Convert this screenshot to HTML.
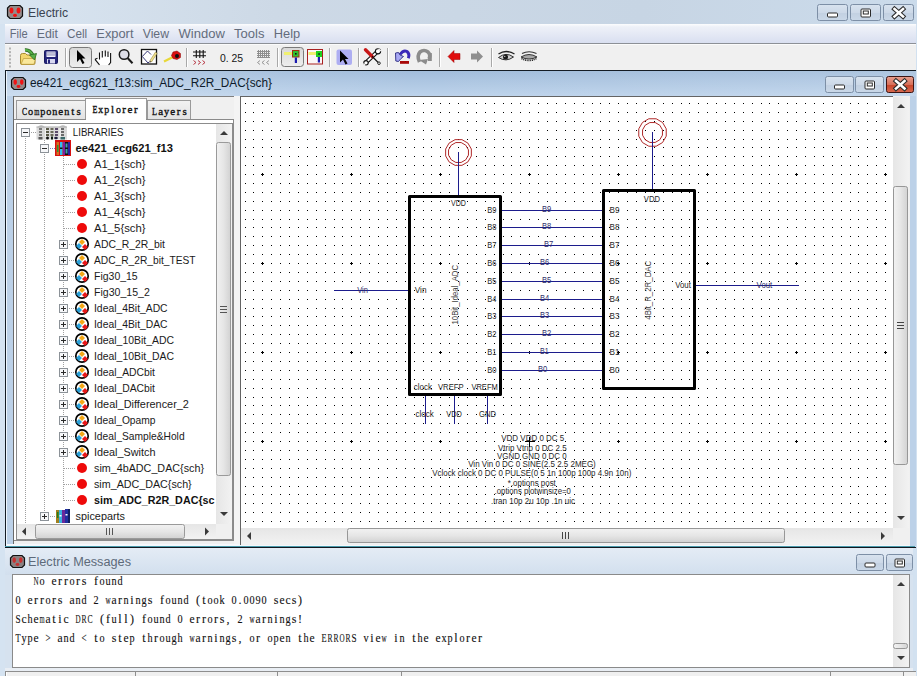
<!DOCTYPE html><html><head><meta charset="utf-8"><style>html,body{margin:0;padding:0;width:917px;height:676px;overflow:hidden;background:#d3e1f0}svg{position:absolute;left:0;top:0;display:block}svg{font-family:"Liberation Sans",sans-serif}</style></head><body>
<svg font-family="Liberation Sans, sans-serif" width="917" height="676" viewBox="0 0 917 676">
<defs>
<linearGradient id="gTitle" x1="0" y1="0" x2="1" y2="0"><stop offset="0" stop-color="#d9e5f1"/><stop offset="0.3" stop-color="#cdd9e6"/><stop offset="0.7" stop-color="#c7d5e4"/><stop offset="1" stop-color="#cbdbeb"/></linearGradient>
<linearGradient id="gMenu" x1="0" y1="0" x2="0" y2="1"><stop offset="0" stop-color="#fcfdfe"/><stop offset="0.15" stop-color="#eef1f8"/><stop offset="1" stop-color="#d9dff0"/></linearGradient>
<linearGradient id="gChild" x1="0" y1="0" x2="0" y2="1"><stop offset="0" stop-color="#a2bddb"/><stop offset="1" stop-color="#bdd3eb"/></linearGradient><linearGradient id="gChildH" x1="0" y1="0" x2="1" y2="0"><stop offset="0" stop-color="#fff" stop-opacity="0.22"/><stop offset="0.45" stop-color="#fff" stop-opacity="0"/><stop offset="0.7" stop-color="#fff" stop-opacity="0.05"/><stop offset="1" stop-color="#fff" stop-opacity="0.12"/></linearGradient><linearGradient id="gMsgT" x1="0" y1="0" x2="0" y2="1"><stop offset="0" stop-color="#e4ecf5"/><stop offset="1" stop-color="#d2dfee"/></linearGradient>
<linearGradient id="gBtn" x1="0" y1="0" x2="0" y2="1"><stop offset="0" stop-color="#d8e3ef"/><stop offset="0.5" stop-color="#cdd9e8"/><stop offset="0.51" stop-color="#c2d0e1"/><stop offset="1" stop-color="#cad8e8"/></linearGradient>
<linearGradient id="gClose" x1="0" y1="0" x2="0" y2="1"><stop offset="0" stop-color="#e8a090"/><stop offset="0.5" stop-color="#d8705a"/><stop offset="0.51" stop-color="#c7442a"/><stop offset="1" stop-color="#d86a50"/></linearGradient>
<linearGradient id="gPress" x1="0" y1="0" x2="0" y2="1"><stop offset="0" stop-color="#d8d8d8"/><stop offset="1" stop-color="#eeeeee"/></linearGradient>
<linearGradient id="gThumbV" x1="0" y1="0" x2="1" y2="0"><stop offset="0" stop-color="#f2f2f2"/><stop offset="0.5" stop-color="#e6e6e6"/><stop offset="1" stop-color="#d2d2d2"/></linearGradient>
<linearGradient id="gThumbH" x1="0" y1="0" x2="0" y2="1"><stop offset="0" stop-color="#f2f2f2"/><stop offset="0.5" stop-color="#e6e6e6"/><stop offset="1" stop-color="#d2d2d2"/></linearGradient>
<linearGradient id="gTrackV" x1="0" y1="0" x2="1" y2="0"><stop offset="0" stop-color="#e6e6e6"/><stop offset="1" stop-color="#f2f2f2"/></linearGradient>
<linearGradient id="gTrackH" x1="0" y1="0" x2="0" y2="1"><stop offset="0" stop-color="#e6e6e6"/><stop offset="1" stop-color="#f2f2f2"/></linearGradient>
<linearGradient id="gTab" x1="0" y1="0" x2="0" y2="1"><stop offset="0" stop-color="#f2f2f2"/><stop offset="1" stop-color="#e2e2e2"/></linearGradient>
<clipPath id="cTree"><rect x="17" y="124" width="199" height="400"/></clipPath>
<clipPath id="cCanvas"><rect x="241" y="97" width="652" height="431"/></clipPath>
</defs>
<rect x="0" y="0" width="917" height="676" fill="url(#gTitle)"/>
<rect x="0" y="24" width="5" height="652" fill="#d5e3f1"/>
<rect x="913" y="24" width="4" height="652" fill="#d2e1f0"/>
<path d="M10.0,5.5 H20.0 L22.5,8.0 V16.0 L20.0,18.5 H10.0 L7.5,16.0 V8.0 Z" fill="#948a8a" stroke="#111" stroke-width="1.2"/>
<ellipse cx="11.50" cy="10.50" rx="1.90" ry="3.00" fill="#f01414"/>
<ellipse cx="18.50" cy="10.50" rx="1.90" ry="3.00" fill="#f01414"/>
<ellipse cx="15.00" cy="15.30" rx="2.00" ry="1.60" fill="#f01414"/>
<text x="28" y="17" font-size="13" fill="#3a4350" textLength="40" lengthAdjust="spacingAndGlyphs">Electric</text>
<rect x="817.5" y="4.5" width="30" height="16" rx="2" fill="url(#gBtn)" stroke="#7d8fa6"/>
<rect x="827.5" y="13.0" width="10" height="4" rx="1" fill="#fff" stroke="#2a2a2a" stroke-width="1"/>
<rect x="850.5" y="4.5" width="30" height="16" rx="2" fill="url(#gBtn)" stroke="#7d8fa6"/>
<rect x="861.0" y="9.0" width="9.5" height="8" rx="1" fill="#fff" stroke="#2a2a2a" stroke-width="1"/>
<rect x="863.3" y="11.0" width="5" height="3" fill="#fff" stroke="#2a2a2a" stroke-width="1"/>
<rect x="883.5" y="4.5" width="30" height="16" rx="2" fill="url(#gBtn)" stroke="#7d8fa6"/>
<path d="M894.5,9.0 L903.0,16.5 M903.0,9.0 L894.5,16.5" stroke="#2a2a2a" stroke-width="4.6" stroke-linecap="square"/>
<path d="M894.5,9.0 L903.0,16.5 M903.0,9.0 L894.5,16.5" stroke="#fff" stroke-width="2.6" stroke-linecap="square"/>
<rect x="5" y="24" width="911" height="19" fill="url(#gMenu)"/>
<rect x="5" y="43" width="911" height="1" fill="#8c9096"/>
<text x="9.7" y="37.7" font-size="12.5" fill="#636c7c" textLength="17.9" lengthAdjust="spacingAndGlyphs">File</text>
<text x="36.7" y="37.7" font-size="12.5" fill="#636c7c" textLength="21.3" lengthAdjust="spacingAndGlyphs">Edit</text>
<text x="67" y="37.7" font-size="12.5" fill="#636c7c" textLength="20.2" lengthAdjust="spacingAndGlyphs">Cell</text>
<text x="96.3" y="37.7" font-size="12.5" fill="#636c7c" textLength="37.2" lengthAdjust="spacingAndGlyphs">Export</text>
<text x="142.7" y="37.7" font-size="12.5" fill="#636c7c" textLength="26.3" lengthAdjust="spacingAndGlyphs">View</text>
<text x="178.5" y="37.7" font-size="12.5" fill="#636c7c" textLength="46.3" lengthAdjust="spacingAndGlyphs">Window</text>
<text x="234" y="37.7" font-size="12.5" fill="#636c7c" textLength="30.4" lengthAdjust="spacingAndGlyphs">Tools</text>
<text x="273.8" y="37.7" font-size="12.5" fill="#636c7c" textLength="26.4" lengthAdjust="spacingAndGlyphs">Help</text>
<rect x="5" y="44" width="911" height="26" fill="#f0f0f0"/>
<rect x="5" y="44" width="911" height="1" fill="#fbfbfb"/>
<rect x="9" y="47.5" width="2" height="2" fill="#b4b4b4"/>
<rect x="9" y="51.1" width="2" height="2" fill="#b4b4b4"/>
<rect x="9" y="54.7" width="2" height="2" fill="#b4b4b4"/>
<rect x="9" y="58.3" width="2" height="2" fill="#b4b4b4"/>
<rect x="9" y="61.9" width="2" height="2" fill="#b4b4b4"/>
<rect x="9" y="65.5" width="2" height="2" fill="#b4b4b4"/>
<rect x="65" y="48" width="1" height="19" fill="#a8a8a8"/><rect x="66" y="48" width="1" height="19" fill="#ffffff"/>
<rect x="186" y="48" width="1" height="19" fill="#a8a8a8"/><rect x="187" y="48" width="1" height="19" fill="#ffffff"/>
<rect x="277" y="48" width="1" height="19" fill="#a8a8a8"/><rect x="278" y="48" width="1" height="19" fill="#ffffff"/>
<rect x="329" y="48" width="1" height="19" fill="#a8a8a8"/><rect x="330" y="48" width="1" height="19" fill="#ffffff"/>
<rect x="358" y="48" width="1" height="19" fill="#a8a8a8"/><rect x="359" y="48" width="1" height="19" fill="#ffffff"/>
<rect x="387" y="48" width="1" height="19" fill="#a8a8a8"/><rect x="388" y="48" width="1" height="19" fill="#ffffff"/>
<rect x="439" y="48" width="1" height="19" fill="#a8a8a8"/><rect x="440" y="48" width="1" height="19" fill="#ffffff"/>
<rect x="491" y="48" width="1" height="19" fill="#a8a8a8"/><rect x="492" y="48" width="1" height="19" fill="#ffffff"/>
<rect x="69.5" y="47.5" width="22" height="20" rx="3" fill="url(#gPress)" stroke="#7a7a7a"/>
<rect x="281.5" y="47.5" width="22" height="19" rx="3" fill="url(#gPress)" stroke="#7a7a7a"/>
<path d="M20.5,55.5 Q20.5,53.5 22.5,53.5 L25.5,53.5 L27,55 L33,55 Q35,55 35,57 L35,63 Q35,64.5 33.5,64.5 L22,64.5 Q20.5,64.5 20.5,63 Z" fill="#f3d66e" stroke="#a88a30" stroke-width="1"/>
<path d="M21,64.3 L23.5,58.5 L35.5,58.5 L34,64.3 Z" fill="#fae89a" stroke="#b89a3a" stroke-width="0.7"/>
<path d="M25,50 Q30,49.5 33,55.5" stroke="#2a6a20" stroke-width="3.4" fill="none"/><path d="M25,50 Q30,49.5 33,55.5" stroke="#58b048" stroke-width="2" fill="none"/><path d="M29.5,55 L36.5,53.5 L34.5,60 Z" fill="#58b048" stroke="#2a6a20" stroke-width="0.8"/>
<rect x="44.5" y="50.5" width="13" height="13" rx="1" fill="#25257a" stroke="#1a1a60"/><rect x="46.5" y="51.5" width="9" height="5.5" fill="#f4f4fc"/><rect x="47" y="52.5" width="8" height="0.9" fill="#7a7aa8"/><rect x="47" y="54.5" width="8" height="0.9" fill="#7a7aa8"/><rect x="47" y="59" width="8" height="4.5" fill="#d8d8f0"/><rect x="48" y="59.5" width="2" height="4" fill="#25257a"/>
<path d="M77,50 L77,62 L80,59 L82.5,64 L84.5,63 L82,58.5 L85.5,58.5 Z" fill="#000"/>
<path d="M95,59.3 L98.5,57.5 L99.5,52.5 L110.6,53 L110.6,62.5 L108.6,65 L100,65 Z" fill="#fff"/>
<path d="M99.5,52.5 V59.5 M102.3,51 V57.5 M105.3,50.5 V56.5 M108,51.5 V57 M110.6,53 V62.5 L108.6,65 M95,59.3 L99.5,64.8 M95,59.3 L97.5,58.3" stroke="#111" stroke-width="1.1" fill="none"/>
<circle cx="124.1" cy="54.5" r="4.8" fill="#dcdce6" stroke="#1a1a1a" stroke-width="1.5"/><path d="M127.6,58 L132.5,63.3" stroke="#1a1a1a" stroke-width="2"/>
<rect x="141.5" y="49.5" width="15" height="14.5" fill="#fff" stroke="#111" stroke-width="1.3"/><path d="M142.3,56.5 L147.5,51 L151,54.5 M149.5,61.5 L148,63 L142.3,56.5" fill="none" stroke="#22226a" stroke-width="0.9"/><path d="M150,60.5 L155.5,52 L157,53.5 L151.5,62 Z" fill="#f0e090" stroke="#a09040" stroke-width="0.6"/><path d="M150,60.5 L151.5,62 L149.3,62.8 Z" fill="#6a5a40"/>
<path d="M164,61.5 L173,57" stroke="#e8d838" stroke-width="2.2"/><polygon points="173,52 177,51 180.5,53.5 180.5,57.5 177,59.5 173,58.5 171.5,55.5" fill="#d81010" stroke="#800" stroke-width="0.5"/><circle cx="177" cy="56" r="2" fill="#111"/>
<path d="M193,52 H206 M193,55.8 H206 M196.3,50 V58 M199.8,50 V58 M203.2,50 V58" stroke="#111" stroke-width="1.1" fill="none"/>
<path d="M193.5,60.5 L196,62.5 L193.5,64.5 M198,60.5 L200.5,62.5 L198,64.5 M202.5,60.5 L205,62.5 L202.5,64.5" stroke="#b02030" stroke-width="0.9" fill="none"/>
<text x="219.9" y="61.7" font-size="11.5" fill="#151515" textLength="23.1" lengthAdjust="spacingAndGlyphs" xml:space="preserve">0. 25</text>
<path d="M257,51h13v1h-13zM257,53h13v1h-13zM257,55h13v1h-13zM257,57h13v1h-13zM258,50h1v8h-1zM260,50h1v8h-1zM262,50h1v8h-1zM264,50h1v8h-1zM266,50h1v8h-1zM268,50h1v8h-1z" fill="#8e8e8e" shape-rendering="crispEdges"/>
<path d="M260,60.5 L257.5,62.5 L260,64.5 M264.5,60.5 L262,62.5 L264.5,64.5 M269,60.5 L266.5,62.5 L269,64.5" stroke="#8a8a8a" stroke-width="0.9" fill="none"/>
<rect x="284" y="52" width="9" height="3" fill="#f0f070"/><rect x="292.5" y="50.5" width="6.5" height="6.5" fill="#30c030" stroke="#a03010" stroke-width="1"/><rect x="295" y="53" width="1.6" height="1.6" fill="#111"/><rect x="294.8" y="57.5" width="2.2" height="5.5" fill="#1a1ab0"/>
<rect x="307.5" y="49.5" width="15" height="14.5" fill="#fbf6f8" stroke="#a82020" stroke-width="1"/><rect x="308.5" y="52" width="9" height="3" fill="#f0f070"/><rect x="316" y="51" width="6" height="6" fill="#20d020"/><rect x="318.3" y="53.3" width="1.5" height="1.5" fill="#111"/><rect x="317.8" y="57" width="2.2" height="5.5" fill="#1a1ab0"/>
<rect x="336.5" y="49.5" width="15.5" height="15.5" rx="2" fill="#aeaef2"/>
<path d="M340,50.5 L340,62.5 L343,59.5 L345.5,64.5 L347.5,63.5 L345,59.0 L348.5,59.0 Z" fill="#000"/>
<path d="M366,62.5 L377.5,51.5" stroke="#111" stroke-width="4"/><path d="M366,62.5 L377.5,51.5" stroke="#fff" stroke-width="1.8"/>
<circle cx="378" cy="51.3" r="2.6" fill="#fff" stroke="#111" stroke-width="1.1"/><path d="M378.5,49 L381,51" stroke="#f0f0f0" stroke-width="1.6"/>
<circle cx="366" cy="62.8" r="2.2" fill="#fff" stroke="#111" stroke-width="1.1"/><path d="M363.5,63.5 L365,65.5" stroke="#f0f0f0" stroke-width="1.4"/>
<path d="M365.5,49.8 L372.3,56.6" stroke="#c81818" stroke-width="3.4" stroke-linecap="round"/><path d="M372,56.3 L378.3,62.6" stroke="#111" stroke-width="1.3"/><circle cx="379" cy="63.2" r="1.3" fill="#fff" stroke="#111" stroke-width="0.9"/>
<path d="M400,54.5 Q403.5,49.5 407,51.5 Q410,54 408.3,58.3" stroke="#3a28b8" stroke-width="3" fill="none"/>
<path d="M395.5,53 L398.5,52.5 L400,55 L403.5,56.5 L401,58.5 L398.5,61.5 L395.8,61 Z" fill="#a8a8f4" stroke="#2a2a80" stroke-width="0.9"/>
<rect x="400" y="61" width="9" height="2.8" fill="#a80808"/>
<path d="M419.5,62 Q416.5,56 420,52 Q424,49 428,52 Q431,55 429,59" stroke="#8c8c8c" stroke-width="3.6" fill="none"/><rect x="428" y="53" width="3.8" height="8" fill="#8c8c8c"/><path d="M419,60 L426,64.5 L428,59 Z" fill="#8c8c8c"/><path d="M422,54.5 Q424,52.5 426,54.5" stroke="#f0f0f0" stroke-width="1.2" fill="none"/>
<polygon points="448,56.5 454,50.5 454,53.5 460,53.5 460,59.5 454,59.5 454,62.5" fill="#e00c0c" stroke="#900" stroke-width="0.5"/>
<polygon points="483,56.5 477,50.5 477,53.5 471,53.5 471,59.5 477,59.5 477,62.5" fill="#8f8f8f"/>
<path d="M498.5,57.5 Q506,51.5 513.5,57 Q506,62.5 498.5,57.5 Z" fill="#cfcfcf" stroke="#333" stroke-width="1"/><circle cx="505.5" cy="57" r="2.5" fill="#1a1a1a"/><circle cx="504.8" cy="56.3" r="0.6" fill="#fff"/><path d="M498.5,54 Q506,49 514.5,54" stroke="#222" stroke-width="1.4" fill="none"/>
<path d="M521,57 Q529,52 537,57 Q529,61 521,57 Z" fill="#a8a8a8" stroke="#333" stroke-width="1"/><path d="M521.5,58.5 Q529,62.5 536.5,58.5" stroke="#222" stroke-width="1.5" stroke-dasharray="1,0.8" fill="none"/><path d="M522,53.5 Q529,50 536.5,53.5" stroke="#333" stroke-width="1.2" fill="none"/>
<rect x="5" y="70" width="911" height="1" fill="#141c24"/>
<rect x="5" y="70" width="1" height="478" fill="#141c24"/>
<rect x="6" y="71" width="1" height="475" fill="#eef6fd"/>
<rect x="7" y="71" width="909" height="25" fill="url(#gChild)"/>
<rect x="7" y="71" width="909" height="25" fill="url(#gChildH)"/>
<rect x="7" y="96" width="6" height="450" fill="#bcd1e8"/>
<rect x="909" y="96" width="1" height="450" fill="#f8fbfe"/>
<rect x="910" y="96" width="6" height="450" fill="#bcd1e8"/>
<rect x="7" y="544" width="903" height="2" fill="#f4f8fc"/>
<path d="M14.0,77.5 H23.0 L25.5,80.0 V87.0 L23.0,89.5 H14.0 L11.5,87.0 V80.0 Z" fill="#948a8a" stroke="#111" stroke-width="1.2"/>
<ellipse cx="15.22" cy="82.11" rx="1.78" ry="2.79" fill="#f01414"/>
<ellipse cx="21.78" cy="82.11" rx="1.78" ry="2.79" fill="#f01414"/>
<ellipse cx="18.50" cy="86.56" rx="1.88" ry="1.49" fill="#f01414"/>
<text x="30" y="87" font-size="12.5" fill="#0d1a2a" textLength="242" lengthAdjust="spacingAndGlyphs">ee421_ecg621_f13:sim_ADC_R2R_DAC{sch}</text>
<rect x="825.5" y="76.5" width="28" height="16" rx="2" fill="url(#gBtn)" stroke="#7d8fa6"/>
<rect x="834.5" y="85.0" width="10" height="4" rx="1" fill="#fff" stroke="#2a2a2a" stroke-width="1"/>
<rect x="855.5" y="76.5" width="28" height="16" rx="2" fill="url(#gBtn)" stroke="#7d8fa6"/>
<rect x="865.0" y="81.0" width="9.5" height="8" rx="1" fill="#fff" stroke="#2a2a2a" stroke-width="1"/>
<rect x="867.3" y="83.0" width="5" height="3" fill="#fff" stroke="#2a2a2a" stroke-width="1"/>
<rect x="886.5" y="76.5" width="27" height="16" rx="2" fill="url(#gClose)" stroke="#3a1414"/>
<path d="M896.0,81.0 L904.5,88.5 M904.5,81.0 L896.0,88.5" stroke="#2a2a2a" stroke-width="4.6" stroke-linecap="square"/>
<path d="M896.0,81.0 L904.5,88.5 M904.5,81.0 L896.0,88.5" stroke="#fff" stroke-width="2.6" stroke-linecap="square"/>
<rect x="13" y="96" width="227" height="448" fill="#f0f0f0"/>
<rect x="13" y="96" width="224" height="1" fill="#808080"/>
<rect x="13" y="96" width="1" height="448" fill="#6a6a6a"/>
<rect x="16.5" y="100.5" width="69" height="19" fill="url(#gTab)" stroke="#9a9a9a"/>
<rect x="147.5" y="100.5" width="43" height="19" fill="url(#gTab)" stroke="#9a9a9a"/>
<rect x="85.5" y="98.5" width="61" height="22" fill="#fff" stroke="#9a9a9a"/>
<text x="22.1" y="115.2" font-size="11" font-family="Liberation Serif" fill="#111" stroke="#111" stroke-width="0.35" textLength="5.1" lengthAdjust="spacingAndGlyphs">C</text>
<text x="28.1" y="115.2" font-size="11" font-family="Liberation Serif" fill="#111" stroke="#111" stroke-width="0.35" textLength="5.1" lengthAdjust="spacingAndGlyphs">o</text>
<text x="34.2" y="115.2" font-size="11" font-family="Liberation Serif" fill="#111" stroke="#111" stroke-width="0.35" textLength="5.1" lengthAdjust="spacingAndGlyphs">m</text>
<text x="40.2" y="115.2" font-size="11" font-family="Liberation Serif" fill="#111" stroke="#111" stroke-width="0.35" textLength="5.1" lengthAdjust="spacingAndGlyphs">p</text>
<text x="46.2" y="115.2" font-size="11" font-family="Liberation Serif" fill="#111" stroke="#111" stroke-width="0.35" textLength="5.1" lengthAdjust="spacingAndGlyphs">o</text>
<text x="52.2" y="115.2" font-size="11" font-family="Liberation Serif" fill="#111" stroke="#111" stroke-width="0.35" textLength="5.1" lengthAdjust="spacingAndGlyphs">n</text>
<text x="64.2" y="115.2" font-size="11" font-family="Liberation Serif" fill="#111" stroke="#111" stroke-width="0.35" textLength="5.1" lengthAdjust="spacingAndGlyphs">n</text>
<text x="58.3 71.2 76.6" y="115.2" font-size="11" font-family="Liberation Serif" fill="#111" stroke="#111" stroke-width="0.35">ets</text>
<text x="92.5" y="113.4" font-size="11" font-family="Liberation Serif" fill="#111" stroke="#111" stroke-width="0.35" textLength="4.9" lengthAdjust="spacingAndGlyphs">E</text>
<text x="98.3" y="113.4" font-size="11" font-family="Liberation Serif" fill="#111" stroke="#111" stroke-width="0.35" textLength="4.9" lengthAdjust="spacingAndGlyphs">x</text>
<text x="104.2" y="113.4" font-size="11" font-family="Liberation Serif" fill="#111" stroke="#111" stroke-width="0.35" textLength="4.9" lengthAdjust="spacingAndGlyphs">p</text>
<text x="115.9" y="113.4" font-size="11" font-family="Liberation Serif" fill="#111" stroke="#111" stroke-width="0.35" textLength="4.9" lengthAdjust="spacingAndGlyphs">o</text>
<text x="110.9 122.3 127.6 134.0" y="113.4" font-size="11" font-family="Liberation Serif" fill="#111" stroke="#111" stroke-width="0.35">lrer</text>
<text x="152.0" y="115.2" font-size="11" font-family="Liberation Serif" fill="#111" stroke="#111" stroke-width="0.35" textLength="5.1" lengthAdjust="spacingAndGlyphs">L</text>
<text x="164.0" y="115.2" font-size="11" font-family="Liberation Serif" fill="#111" stroke="#111" stroke-width="0.35" textLength="5.1" lengthAdjust="spacingAndGlyphs">y</text>
<text x="158.2 170.2 176.8 182.5" y="115.2" font-size="11" font-family="Liberation Serif" fill="#111" stroke="#111" stroke-width="0.35">aers</text>
<rect x="14" y="119" width="220" height="422" fill="#fff"/>
<rect x="14" y="119" width="220" height="1" fill="#8a8a8a"/><rect x="233" y="119" width="1" height="422" fill="#8a8a8a"/><rect x="14" y="540" width="220" height="1" fill="#8a8a8a"/>
<rect x="86" y="119" width="60" height="2" fill="#fff"/>
<rect x="16.5" y="123.5" width="216" height="416" fill="#fff" stroke="#8c8c8c"/>
<g clip-path="url(#cTree)">
<path d="M25,138h1v1h-1zM25,140h1v1h-1zM25,142h1v1h-1zM25,144h1v1h-1zM25,146h1v1h-1zM25,148h1v1h-1zM25,150h1v1h-1zM25,152h1v1h-1zM25,154h1v1h-1zM25,156h1v1h-1zM25,158h1v1h-1zM25,160h1v1h-1zM25,162h1v1h-1zM25,164h1v1h-1zM25,166h1v1h-1zM25,168h1v1h-1zM25,170h1v1h-1zM25,172h1v1h-1zM25,174h1v1h-1zM25,176h1v1h-1zM25,178h1v1h-1zM25,180h1v1h-1zM25,182h1v1h-1zM25,184h1v1h-1zM25,186h1v1h-1zM25,188h1v1h-1zM25,190h1v1h-1zM25,192h1v1h-1zM25,194h1v1h-1zM25,196h1v1h-1zM25,198h1v1h-1zM25,200h1v1h-1zM25,202h1v1h-1zM25,204h1v1h-1zM25,206h1v1h-1zM25,208h1v1h-1zM25,210h1v1h-1zM25,212h1v1h-1zM25,214h1v1h-1zM25,216h1v1h-1zM25,218h1v1h-1zM25,220h1v1h-1zM25,222h1v1h-1zM25,224h1v1h-1zM25,226h1v1h-1zM25,228h1v1h-1zM25,230h1v1h-1zM25,232h1v1h-1zM25,234h1v1h-1zM25,236h1v1h-1zM25,238h1v1h-1zM25,240h1v1h-1zM25,242h1v1h-1zM25,244h1v1h-1zM25,246h1v1h-1zM25,248h1v1h-1zM25,250h1v1h-1zM25,252h1v1h-1zM25,254h1v1h-1zM25,256h1v1h-1zM25,258h1v1h-1zM25,260h1v1h-1zM25,262h1v1h-1zM25,264h1v1h-1zM25,266h1v1h-1zM25,268h1v1h-1zM25,270h1v1h-1zM25,272h1v1h-1zM25,274h1v1h-1zM25,276h1v1h-1zM25,278h1v1h-1zM25,280h1v1h-1zM25,282h1v1h-1zM25,284h1v1h-1zM25,286h1v1h-1zM25,288h1v1h-1zM25,290h1v1h-1zM25,292h1v1h-1zM25,294h1v1h-1zM25,296h1v1h-1zM25,298h1v1h-1zM25,300h1v1h-1zM25,302h1v1h-1zM25,304h1v1h-1zM25,306h1v1h-1zM25,308h1v1h-1zM25,310h1v1h-1zM25,312h1v1h-1zM25,314h1v1h-1zM25,316h1v1h-1zM25,318h1v1h-1zM25,320h1v1h-1zM25,322h1v1h-1zM25,324h1v1h-1zM25,326h1v1h-1zM25,328h1v1h-1zM25,330h1v1h-1zM25,332h1v1h-1zM25,334h1v1h-1zM25,336h1v1h-1zM25,338h1v1h-1zM25,340h1v1h-1zM25,342h1v1h-1zM25,344h1v1h-1zM25,346h1v1h-1zM25,348h1v1h-1zM25,350h1v1h-1zM25,352h1v1h-1zM25,354h1v1h-1zM25,356h1v1h-1zM25,358h1v1h-1zM25,360h1v1h-1zM25,362h1v1h-1zM25,364h1v1h-1zM25,366h1v1h-1zM25,368h1v1h-1zM25,370h1v1h-1zM25,372h1v1h-1zM25,374h1v1h-1zM25,376h1v1h-1zM25,378h1v1h-1zM25,380h1v1h-1zM25,382h1v1h-1zM25,384h1v1h-1zM25,386h1v1h-1zM25,388h1v1h-1zM25,390h1v1h-1zM25,392h1v1h-1zM25,394h1v1h-1zM25,396h1v1h-1zM25,398h1v1h-1zM25,400h1v1h-1zM25,402h1v1h-1zM25,404h1v1h-1zM25,406h1v1h-1zM25,408h1v1h-1zM25,410h1v1h-1zM25,412h1v1h-1zM25,414h1v1h-1zM25,416h1v1h-1zM25,418h1v1h-1zM25,420h1v1h-1zM25,422h1v1h-1zM25,424h1v1h-1zM25,426h1v1h-1zM25,428h1v1h-1zM25,430h1v1h-1zM25,432h1v1h-1zM25,434h1v1h-1zM25,436h1v1h-1zM25,438h1v1h-1zM25,440h1v1h-1zM25,442h1v1h-1zM25,444h1v1h-1zM25,446h1v1h-1zM25,448h1v1h-1zM25,450h1v1h-1zM25,452h1v1h-1zM25,454h1v1h-1zM25,456h1v1h-1zM25,458h1v1h-1zM25,460h1v1h-1zM25,462h1v1h-1zM25,464h1v1h-1zM25,466h1v1h-1zM25,468h1v1h-1zM25,470h1v1h-1zM25,472h1v1h-1zM25,474h1v1h-1zM25,476h1v1h-1zM25,478h1v1h-1zM25,480h1v1h-1zM25,482h1v1h-1zM25,484h1v1h-1zM25,486h1v1h-1zM25,488h1v1h-1zM25,490h1v1h-1zM25,492h1v1h-1zM25,494h1v1h-1zM25,496h1v1h-1zM25,498h1v1h-1zM25,500h1v1h-1zM25,502h1v1h-1zM25,504h1v1h-1zM25,506h1v1h-1zM25,508h1v1h-1zM25,510h1v1h-1zM25,512h1v1h-1zM25,514h1v1h-1zM25,516h1v1h-1zM25,518h1v1h-1zM25,520h1v1h-1zM25,522h1v1h-1z" fill="#a0a0a0"/>
<path d="M44,140h1v1h-1zM44,142h1v1h-1z" fill="#a0a0a0"/>
<path d="M44,154h1v1h-1zM44,156h1v1h-1zM44,158h1v1h-1zM44,160h1v1h-1zM44,162h1v1h-1zM44,164h1v1h-1zM44,166h1v1h-1zM44,168h1v1h-1zM44,170h1v1h-1zM44,172h1v1h-1zM44,174h1v1h-1zM44,176h1v1h-1zM44,178h1v1h-1zM44,180h1v1h-1zM44,182h1v1h-1zM44,184h1v1h-1zM44,186h1v1h-1zM44,188h1v1h-1zM44,190h1v1h-1zM44,192h1v1h-1zM44,194h1v1h-1zM44,196h1v1h-1zM44,198h1v1h-1zM44,200h1v1h-1zM44,202h1v1h-1zM44,204h1v1h-1zM44,206h1v1h-1zM44,208h1v1h-1zM44,210h1v1h-1zM44,212h1v1h-1zM44,214h1v1h-1zM44,216h1v1h-1zM44,218h1v1h-1zM44,220h1v1h-1zM44,222h1v1h-1zM44,224h1v1h-1zM44,226h1v1h-1zM44,228h1v1h-1zM44,230h1v1h-1zM44,232h1v1h-1zM44,234h1v1h-1zM44,236h1v1h-1zM44,238h1v1h-1zM44,240h1v1h-1zM44,242h1v1h-1zM44,244h1v1h-1zM44,246h1v1h-1zM44,248h1v1h-1zM44,250h1v1h-1zM44,252h1v1h-1zM44,254h1v1h-1zM44,256h1v1h-1zM44,258h1v1h-1zM44,260h1v1h-1zM44,262h1v1h-1zM44,264h1v1h-1zM44,266h1v1h-1zM44,268h1v1h-1zM44,270h1v1h-1zM44,272h1v1h-1zM44,274h1v1h-1zM44,276h1v1h-1zM44,278h1v1h-1zM44,280h1v1h-1zM44,282h1v1h-1zM44,284h1v1h-1zM44,286h1v1h-1zM44,288h1v1h-1zM44,290h1v1h-1zM44,292h1v1h-1zM44,294h1v1h-1zM44,296h1v1h-1zM44,298h1v1h-1zM44,300h1v1h-1zM44,302h1v1h-1zM44,304h1v1h-1zM44,306h1v1h-1zM44,308h1v1h-1zM44,310h1v1h-1zM44,312h1v1h-1zM44,314h1v1h-1zM44,316h1v1h-1zM44,318h1v1h-1zM44,320h1v1h-1zM44,322h1v1h-1zM44,324h1v1h-1zM44,326h1v1h-1zM44,328h1v1h-1zM44,330h1v1h-1zM44,332h1v1h-1zM44,334h1v1h-1zM44,336h1v1h-1zM44,338h1v1h-1zM44,340h1v1h-1zM44,342h1v1h-1zM44,344h1v1h-1zM44,346h1v1h-1zM44,348h1v1h-1zM44,350h1v1h-1zM44,352h1v1h-1zM44,354h1v1h-1zM44,356h1v1h-1zM44,358h1v1h-1zM44,360h1v1h-1zM44,362h1v1h-1zM44,364h1v1h-1zM44,366h1v1h-1zM44,368h1v1h-1zM44,370h1v1h-1zM44,372h1v1h-1zM44,374h1v1h-1zM44,376h1v1h-1zM44,378h1v1h-1zM44,380h1v1h-1zM44,382h1v1h-1zM44,384h1v1h-1zM44,386h1v1h-1zM44,388h1v1h-1zM44,390h1v1h-1zM44,392h1v1h-1zM44,394h1v1h-1zM44,396h1v1h-1zM44,398h1v1h-1zM44,400h1v1h-1zM44,402h1v1h-1zM44,404h1v1h-1zM44,406h1v1h-1zM44,408h1v1h-1zM44,410h1v1h-1zM44,412h1v1h-1zM44,414h1v1h-1zM44,416h1v1h-1zM44,418h1v1h-1zM44,420h1v1h-1zM44,422h1v1h-1zM44,424h1v1h-1zM44,426h1v1h-1zM44,428h1v1h-1zM44,430h1v1h-1zM44,432h1v1h-1zM44,434h1v1h-1zM44,436h1v1h-1zM44,438h1v1h-1zM44,440h1v1h-1zM44,442h1v1h-1zM44,444h1v1h-1zM44,446h1v1h-1zM44,448h1v1h-1zM44,450h1v1h-1zM44,452h1v1h-1zM44,454h1v1h-1zM44,456h1v1h-1zM44,458h1v1h-1zM44,460h1v1h-1zM44,462h1v1h-1zM44,464h1v1h-1zM44,466h1v1h-1zM44,468h1v1h-1zM44,470h1v1h-1zM44,472h1v1h-1zM44,474h1v1h-1zM44,476h1v1h-1zM44,478h1v1h-1zM44,480h1v1h-1zM44,482h1v1h-1zM44,484h1v1h-1zM44,486h1v1h-1zM44,488h1v1h-1zM44,490h1v1h-1zM44,492h1v1h-1zM44,494h1v1h-1zM44,496h1v1h-1zM44,498h1v1h-1zM44,500h1v1h-1zM44,502h1v1h-1zM44,504h1v1h-1zM44,506h1v1h-1zM44,508h1v1h-1zM44,510h1v1h-1z" fill="#a0a0a0"/>
<path d="M63,156h1v1h-1zM63,158h1v1h-1zM63,160h1v1h-1zM63,162h1v1h-1zM63,164h1v1h-1zM63,166h1v1h-1zM63,168h1v1h-1zM63,170h1v1h-1zM63,172h1v1h-1zM63,174h1v1h-1zM63,176h1v1h-1zM63,178h1v1h-1zM63,180h1v1h-1zM63,182h1v1h-1zM63,184h1v1h-1zM63,186h1v1h-1zM63,188h1v1h-1zM63,190h1v1h-1zM63,192h1v1h-1zM63,194h1v1h-1zM63,196h1v1h-1zM63,198h1v1h-1zM63,200h1v1h-1zM63,202h1v1h-1zM63,204h1v1h-1zM63,206h1v1h-1zM63,208h1v1h-1zM63,210h1v1h-1zM63,212h1v1h-1zM63,214h1v1h-1zM63,216h1v1h-1zM63,218h1v1h-1zM63,220h1v1h-1zM63,222h1v1h-1zM63,224h1v1h-1zM63,226h1v1h-1zM63,228h1v1h-1zM63,230h1v1h-1zM63,232h1v1h-1zM63,234h1v1h-1zM63,236h1v1h-1zM63,238h1v1h-1zM63,240h1v1h-1zM63,242h1v1h-1zM63,244h1v1h-1zM63,246h1v1h-1zM63,248h1v1h-1zM63,250h1v1h-1zM63,252h1v1h-1zM63,254h1v1h-1zM63,256h1v1h-1zM63,258h1v1h-1zM63,260h1v1h-1zM63,262h1v1h-1zM63,264h1v1h-1zM63,266h1v1h-1zM63,268h1v1h-1zM63,270h1v1h-1zM63,272h1v1h-1zM63,274h1v1h-1zM63,276h1v1h-1zM63,278h1v1h-1zM63,280h1v1h-1zM63,282h1v1h-1zM63,284h1v1h-1zM63,286h1v1h-1zM63,288h1v1h-1zM63,290h1v1h-1zM63,292h1v1h-1zM63,294h1v1h-1zM63,296h1v1h-1zM63,298h1v1h-1zM63,300h1v1h-1zM63,302h1v1h-1zM63,304h1v1h-1zM63,306h1v1h-1zM63,308h1v1h-1zM63,310h1v1h-1zM63,312h1v1h-1zM63,314h1v1h-1zM63,316h1v1h-1zM63,318h1v1h-1zM63,320h1v1h-1zM63,322h1v1h-1zM63,324h1v1h-1zM63,326h1v1h-1zM63,328h1v1h-1zM63,330h1v1h-1zM63,332h1v1h-1zM63,334h1v1h-1zM63,336h1v1h-1zM63,338h1v1h-1zM63,340h1v1h-1zM63,342h1v1h-1zM63,344h1v1h-1zM63,346h1v1h-1zM63,348h1v1h-1zM63,350h1v1h-1zM63,352h1v1h-1zM63,354h1v1h-1zM63,356h1v1h-1zM63,358h1v1h-1zM63,360h1v1h-1zM63,362h1v1h-1zM63,364h1v1h-1zM63,366h1v1h-1zM63,368h1v1h-1zM63,370h1v1h-1zM63,372h1v1h-1zM63,374h1v1h-1zM63,376h1v1h-1zM63,378h1v1h-1zM63,380h1v1h-1zM63,382h1v1h-1zM63,384h1v1h-1zM63,386h1v1h-1zM63,388h1v1h-1zM63,390h1v1h-1zM63,392h1v1h-1zM63,394h1v1h-1zM63,396h1v1h-1zM63,398h1v1h-1zM63,400h1v1h-1zM63,402h1v1h-1zM63,404h1v1h-1zM63,406h1v1h-1zM63,408h1v1h-1zM63,410h1v1h-1zM63,412h1v1h-1zM63,414h1v1h-1zM63,416h1v1h-1zM63,418h1v1h-1zM63,420h1v1h-1zM63,422h1v1h-1zM63,424h1v1h-1zM63,426h1v1h-1zM63,428h1v1h-1zM63,430h1v1h-1zM63,432h1v1h-1zM63,434h1v1h-1zM63,436h1v1h-1zM63,438h1v1h-1zM63,440h1v1h-1zM63,442h1v1h-1zM63,444h1v1h-1zM63,446h1v1h-1zM63,448h1v1h-1zM63,450h1v1h-1zM63,452h1v1h-1zM63,454h1v1h-1zM63,456h1v1h-1zM63,458h1v1h-1zM63,460h1v1h-1zM63,462h1v1h-1zM63,464h1v1h-1zM63,466h1v1h-1zM63,468h1v1h-1zM63,470h1v1h-1zM63,472h1v1h-1zM63,474h1v1h-1zM63,476h1v1h-1zM63,478h1v1h-1zM63,480h1v1h-1zM63,482h1v1h-1zM63,484h1v1h-1zM63,486h1v1h-1zM63,488h1v1h-1zM63,490h1v1h-1zM63,492h1v1h-1zM63,494h1v1h-1zM63,496h1v1h-1zM63,498h1v1h-1zM63,500h1v1h-1z" fill="#a0a0a0"/>
<rect x="21.5" y="128.5" width="8" height="8" fill="#f6f7f9" stroke="#8c9298"/>
<rect x="23" y="132" width="5" height="1" fill="#2a2a2a"/>
<path d="M31,132h1v1h-1zM33,132h1v1h-1zM35,132h1v1h-1z" fill="#a0a0a0"/>
<rect x="36.5" y="126.5" width="30.5" height="13" fill="#dadada"/>
<path d="M37,127.5 Q41,123 45.5,127.5 Z M58.5,127.5 Q63,123 67,127.5 Z" fill="#b4b4b4"/>
<rect x="36.5" y="126.5" width="30.5" height="1.2" fill="#bcbcbc"/>
<rect x="39" y="128" width="3" height="2" fill="#7a7a7a"/>
<rect x="39" y="131" width="3" height="2" fill="#7a7a7a"/>
<rect x="39" y="134" width="3" height="2" fill="#7a7a7a"/>
<rect x="46" y="128" width="3" height="2" fill="#5a5a48"/>
<rect x="46" y="131" width="3" height="2" fill="#5a5a48"/>
<rect x="46" y="134" width="3" height="2" fill="#5a5a48"/>
<rect x="50.5" y="128" width="3" height="2" fill="#6a6a5a"/>
<rect x="50.5" y="131" width="3" height="2" fill="#6a6a5a"/>
<rect x="50.5" y="134" width="3" height="2" fill="#6a6a5a"/>
<rect x="55" y="128" width="3" height="2" fill="#5a4a6a"/>
<rect x="55" y="131" width="3" height="2" fill="#5a4a6a"/>
<rect x="55" y="134" width="3" height="2" fill="#5a4a6a"/>
<rect x="61" y="128" width="3" height="2" fill="#6a6a6a"/>
<rect x="61" y="131" width="3" height="2" fill="#6a6a6a"/>
<rect x="61" y="134" width="3" height="2" fill="#6a6a6a"/>
<rect x="45" y="128" width="1" height="9" fill="#f4f4f4"/><rect x="59.5" y="128" width="1.2" height="9" fill="#f4f4f4"/>
<rect x="38.5" y="137" width="4" height="2.5" fill="#5a5a5a"/><circle cx="47.5" cy="138" r="1.5" fill="#111"/><rect x="51" y="136.5" width="2" height="3" fill="#0a1a10"/><ellipse cx="56" cy="138" rx="1.8" ry="1.3" fill="#1a1a3a"/><rect x="60.5" y="137" width="4.5" height="2.5" fill="#3a6a6a"/>
<text x="72.8" y="136" font-size="11" fill="#1a1a1a" textLength="50.7" lengthAdjust="spacingAndGlyphs">LIBRARIES</text>
<rect x="40.5" y="144.5" width="8" height="8" fill="#f6f7f9" stroke="#8c9298"/>
<rect x="42" y="148" width="5" height="1" fill="#2a2a2a"/>
<path d="M50,148h1v1h-1zM52,148h1v1h-1zM54,148h1v1h-1z" fill="#8080c0"/>
<rect x="55" y="140" width="16" height="16" fill="#d81010"/>
<rect x="56.5" y="142" width="2.5" height="13" fill="#d07020"/><rect x="57" y="145" width="1.5" height="7" fill="#309030"/><rect x="60" y="142" width="2.5" height="13" fill="#30c0f0"/><rect x="60" y="147.5" width="2.5" height="1.5" fill="#111"/><rect x="63" y="142" width="2" height="13" fill="#8020a0"/><rect x="65" y="142" width="3" height="13" fill="#111"/><rect x="65.5" y="143.5" width="2" height="4" fill="#40a0b0"/><rect x="65.5" y="149" width="2" height="4.5" fill="#40a0b0"/><rect x="68" y="142" width="2" height="13" fill="#3020a0"/>
<text x="75.6" y="152" font-size="11" font-weight="bold" fill="#111" textLength="97.3" lengthAdjust="spacingAndGlyphs">ee421_ecg621_f13</text>
<path d="M64,164h1v1h-1zM66,164h1v1h-1zM68,164h1v1h-1zM70,164h1v1h-1zM72,164h1v1h-1zM74,164h1v1h-1z" fill="#a0a0a0"/>
<circle cx="82" cy="164" r="5" fill="#ee0a0a"/>
<text x="94" y="168" font-size="11" fill="#1a1a1a" textLength="51.5" lengthAdjust="spacingAndGlyphs">A1_1{sch}</text>
<path d="M64,180h1v1h-1zM66,180h1v1h-1zM68,180h1v1h-1zM70,180h1v1h-1zM72,180h1v1h-1zM74,180h1v1h-1z" fill="#a0a0a0"/>
<circle cx="82" cy="180" r="5" fill="#ee0a0a"/>
<text x="94" y="184" font-size="11" fill="#1a1a1a" textLength="51.5" lengthAdjust="spacingAndGlyphs">A1_2{sch}</text>
<path d="M64,196h1v1h-1zM66,196h1v1h-1zM68,196h1v1h-1zM70,196h1v1h-1zM72,196h1v1h-1zM74,196h1v1h-1z" fill="#a0a0a0"/>
<circle cx="82" cy="196" r="5" fill="#ee0a0a"/>
<text x="94" y="200" font-size="11" fill="#1a1a1a" textLength="51.5" lengthAdjust="spacingAndGlyphs">A1_3{sch}</text>
<path d="M64,212h1v1h-1zM66,212h1v1h-1zM68,212h1v1h-1zM70,212h1v1h-1zM72,212h1v1h-1zM74,212h1v1h-1z" fill="#a0a0a0"/>
<circle cx="82" cy="212" r="5" fill="#ee0a0a"/>
<text x="94" y="216" font-size="11" fill="#1a1a1a" textLength="51.5" lengthAdjust="spacingAndGlyphs">A1_4{sch}</text>
<path d="M64,228h1v1h-1zM66,228h1v1h-1zM68,228h1v1h-1zM70,228h1v1h-1zM72,228h1v1h-1zM74,228h1v1h-1z" fill="#a0a0a0"/>
<circle cx="82" cy="228" r="5" fill="#ee0a0a"/>
<text x="94" y="232" font-size="11" fill="#1a1a1a" textLength="51.5" lengthAdjust="spacingAndGlyphs">A1_5{sch}</text>
<rect x="59.5" y="240.5" width="8" height="8" fill="#f6f7f9" stroke="#8c9298"/>
<rect x="61" y="244" width="5" height="1" fill="#2a2a2a"/>
<rect x="63" y="242" width="1" height="5" fill="#2a2a2a"/>
<path d="M69,244h1v1h-1zM71,244h1v1h-1zM73,244h1v1h-1z" fill="#a0a0a0"/>
<circle cx="82" cy="244" r="6.2" fill="#fff" stroke="#000" stroke-width="1.7"/>
<path d="M82,239 l3,3 l-3,3 l-3,-3z" fill="#f4a818"/>
<path d="M79,243 l3,3 l-3,3 l-3,-3z" fill="#2aa0d8"/>
<path d="M85,244 l3,3 l-3,3 l-3,-3z" fill="#e81818"/>
<text x="94" y="248" font-size="11" fill="#1a1a1a" textLength="71" lengthAdjust="spacingAndGlyphs">ADC_R_2R_bit</text>
<rect x="59.5" y="256.5" width="8" height="8" fill="#f6f7f9" stroke="#8c9298"/>
<rect x="61" y="260" width="5" height="1" fill="#2a2a2a"/>
<rect x="63" y="258" width="1" height="5" fill="#2a2a2a"/>
<path d="M69,260h1v1h-1zM71,260h1v1h-1zM73,260h1v1h-1z" fill="#a0a0a0"/>
<circle cx="82" cy="260" r="6.2" fill="#fff" stroke="#000" stroke-width="1.7"/>
<path d="M82,255 l3,3 l-3,3 l-3,-3z" fill="#f4a818"/>
<path d="M79,259 l3,3 l-3,3 l-3,-3z" fill="#2aa0d8"/>
<path d="M85,260 l3,3 l-3,3 l-3,-3z" fill="#e81818"/>
<text x="94" y="264" font-size="11" fill="#1a1a1a" textLength="101.6" lengthAdjust="spacingAndGlyphs">ADC_R_2R_bit_TEST</text>
<rect x="59.5" y="272.5" width="8" height="8" fill="#f6f7f9" stroke="#8c9298"/>
<rect x="61" y="276" width="5" height="1" fill="#2a2a2a"/>
<rect x="63" y="274" width="1" height="5" fill="#2a2a2a"/>
<path d="M69,276h1v1h-1zM71,276h1v1h-1zM73,276h1v1h-1z" fill="#a0a0a0"/>
<circle cx="82" cy="276" r="6.2" fill="#fff" stroke="#000" stroke-width="1.7"/>
<path d="M82,271 l3,3 l-3,3 l-3,-3z" fill="#f4a818"/>
<path d="M79,275 l3,3 l-3,3 l-3,-3z" fill="#2aa0d8"/>
<path d="M85,276 l3,3 l-3,3 l-3,-3z" fill="#e81818"/>
<text x="94" y="280" font-size="11" fill="#1a1a1a" textLength="43.7" lengthAdjust="spacingAndGlyphs">Fig30_15</text>
<rect x="59.5" y="288.5" width="8" height="8" fill="#f6f7f9" stroke="#8c9298"/>
<rect x="61" y="292" width="5" height="1" fill="#2a2a2a"/>
<rect x="63" y="290" width="1" height="5" fill="#2a2a2a"/>
<path d="M69,292h1v1h-1zM71,292h1v1h-1zM73,292h1v1h-1z" fill="#a0a0a0"/>
<circle cx="82" cy="292" r="6.2" fill="#fff" stroke="#000" stroke-width="1.7"/>
<path d="M82,287 l3,3 l-3,3 l-3,-3z" fill="#f4a818"/>
<path d="M79,291 l3,3 l-3,3 l-3,-3z" fill="#2aa0d8"/>
<path d="M85,292 l3,3 l-3,3 l-3,-3z" fill="#e81818"/>
<text x="94" y="296" font-size="11" fill="#1a1a1a" textLength="55.8" lengthAdjust="spacingAndGlyphs">Fig30_15_2</text>
<rect x="59.5" y="304.5" width="8" height="8" fill="#f6f7f9" stroke="#8c9298"/>
<rect x="61" y="308" width="5" height="1" fill="#2a2a2a"/>
<rect x="63" y="306" width="1" height="5" fill="#2a2a2a"/>
<path d="M69,308h1v1h-1zM71,308h1v1h-1zM73,308h1v1h-1z" fill="#a0a0a0"/>
<circle cx="82" cy="308" r="6.2" fill="#fff" stroke="#000" stroke-width="1.7"/>
<path d="M82,303 l3,3 l-3,3 l-3,-3z" fill="#f4a818"/>
<path d="M79,307 l3,3 l-3,3 l-3,-3z" fill="#2aa0d8"/>
<path d="M85,308 l3,3 l-3,3 l-3,-3z" fill="#e81818"/>
<text x="94" y="312" font-size="11" fill="#1a1a1a" textLength="73.6" lengthAdjust="spacingAndGlyphs">Ideal_4Bit_ADC</text>
<rect x="59.5" y="320.5" width="8" height="8" fill="#f6f7f9" stroke="#8c9298"/>
<rect x="61" y="324" width="5" height="1" fill="#2a2a2a"/>
<rect x="63" y="322" width="1" height="5" fill="#2a2a2a"/>
<path d="M69,324h1v1h-1zM71,324h1v1h-1zM73,324h1v1h-1z" fill="#a0a0a0"/>
<circle cx="82" cy="324" r="6.2" fill="#fff" stroke="#000" stroke-width="1.7"/>
<path d="M82,319 l3,3 l-3,3 l-3,-3z" fill="#f4a818"/>
<path d="M79,323 l3,3 l-3,3 l-3,-3z" fill="#2aa0d8"/>
<path d="M85,324 l3,3 l-3,3 l-3,-3z" fill="#e81818"/>
<text x="94" y="328" font-size="11" fill="#1a1a1a" textLength="73.6" lengthAdjust="spacingAndGlyphs">Ideal_4Bit_DAC</text>
<rect x="59.5" y="336.5" width="8" height="8" fill="#f6f7f9" stroke="#8c9298"/>
<rect x="61" y="340" width="5" height="1" fill="#2a2a2a"/>
<rect x="63" y="338" width="1" height="5" fill="#2a2a2a"/>
<path d="M69,340h1v1h-1zM71,340h1v1h-1zM73,340h1v1h-1z" fill="#a0a0a0"/>
<circle cx="82" cy="340" r="6.2" fill="#fff" stroke="#000" stroke-width="1.7"/>
<path d="M82,335 l3,3 l-3,3 l-3,-3z" fill="#f4a818"/>
<path d="M79,339 l3,3 l-3,3 l-3,-3z" fill="#2aa0d8"/>
<path d="M85,340 l3,3 l-3,3 l-3,-3z" fill="#e81818"/>
<text x="94" y="344" font-size="11" fill="#1a1a1a" textLength="80" lengthAdjust="spacingAndGlyphs">Ideal_10Bit_ADC</text>
<rect x="59.5" y="352.5" width="8" height="8" fill="#f6f7f9" stroke="#8c9298"/>
<rect x="61" y="356" width="5" height="1" fill="#2a2a2a"/>
<rect x="63" y="354" width="1" height="5" fill="#2a2a2a"/>
<path d="M69,356h1v1h-1zM71,356h1v1h-1zM73,356h1v1h-1z" fill="#a0a0a0"/>
<circle cx="82" cy="356" r="6.2" fill="#fff" stroke="#000" stroke-width="1.7"/>
<path d="M82,351 l3,3 l-3,3 l-3,-3z" fill="#f4a818"/>
<path d="M79,355 l3,3 l-3,3 l-3,-3z" fill="#2aa0d8"/>
<path d="M85,356 l3,3 l-3,3 l-3,-3z" fill="#e81818"/>
<text x="94" y="360" font-size="11" fill="#1a1a1a" textLength="80" lengthAdjust="spacingAndGlyphs">Ideal_10Bit_DAC</text>
<rect x="59.5" y="368.5" width="8" height="8" fill="#f6f7f9" stroke="#8c9298"/>
<rect x="61" y="372" width="5" height="1" fill="#2a2a2a"/>
<rect x="63" y="370" width="1" height="5" fill="#2a2a2a"/>
<path d="M69,372h1v1h-1zM71,372h1v1h-1zM73,372h1v1h-1z" fill="#a0a0a0"/>
<circle cx="82" cy="372" r="6.2" fill="#fff" stroke="#000" stroke-width="1.7"/>
<path d="M82,367 l3,3 l-3,3 l-3,-3z" fill="#f4a818"/>
<path d="M79,371 l3,3 l-3,3 l-3,-3z" fill="#2aa0d8"/>
<path d="M85,372 l3,3 l-3,3 l-3,-3z" fill="#e81818"/>
<text x="94" y="376" font-size="11" fill="#1a1a1a" textLength="61" lengthAdjust="spacingAndGlyphs">Ideal_ADCbit</text>
<rect x="59.5" y="384.5" width="8" height="8" fill="#f6f7f9" stroke="#8c9298"/>
<rect x="61" y="388" width="5" height="1" fill="#2a2a2a"/>
<rect x="63" y="386" width="1" height="5" fill="#2a2a2a"/>
<path d="M69,388h1v1h-1zM71,388h1v1h-1zM73,388h1v1h-1z" fill="#a0a0a0"/>
<circle cx="82" cy="388" r="6.2" fill="#fff" stroke="#000" stroke-width="1.7"/>
<path d="M82,383 l3,3 l-3,3 l-3,-3z" fill="#f4a818"/>
<path d="M79,387 l3,3 l-3,3 l-3,-3z" fill="#2aa0d8"/>
<path d="M85,388 l3,3 l-3,3 l-3,-3z" fill="#e81818"/>
<text x="94" y="392" font-size="11" fill="#1a1a1a" textLength="61" lengthAdjust="spacingAndGlyphs">Ideal_DACbit</text>
<rect x="59.5" y="400.5" width="8" height="8" fill="#f6f7f9" stroke="#8c9298"/>
<rect x="61" y="404" width="5" height="1" fill="#2a2a2a"/>
<rect x="63" y="402" width="1" height="5" fill="#2a2a2a"/>
<path d="M69,404h1v1h-1zM71,404h1v1h-1zM73,404h1v1h-1z" fill="#a0a0a0"/>
<circle cx="82" cy="404" r="6.2" fill="#fff" stroke="#000" stroke-width="1.7"/>
<path d="M82,399 l3,3 l-3,3 l-3,-3z" fill="#f4a818"/>
<path d="M79,403 l3,3 l-3,3 l-3,-3z" fill="#2aa0d8"/>
<path d="M85,404 l3,3 l-3,3 l-3,-3z" fill="#e81818"/>
<text x="94" y="408" font-size="11" fill="#1a1a1a" textLength="94.9" lengthAdjust="spacingAndGlyphs">Ideal_Differencer_2</text>
<rect x="59.5" y="416.5" width="8" height="8" fill="#f6f7f9" stroke="#8c9298"/>
<rect x="61" y="420" width="5" height="1" fill="#2a2a2a"/>
<rect x="63" y="418" width="1" height="5" fill="#2a2a2a"/>
<path d="M69,420h1v1h-1zM71,420h1v1h-1zM73,420h1v1h-1z" fill="#a0a0a0"/>
<circle cx="82" cy="420" r="6.2" fill="#fff" stroke="#000" stroke-width="1.7"/>
<path d="M82,415 l3,3 l-3,3 l-3,-3z" fill="#f4a818"/>
<path d="M79,419 l3,3 l-3,3 l-3,-3z" fill="#2aa0d8"/>
<path d="M85,420 l3,3 l-3,3 l-3,-3z" fill="#e81818"/>
<text x="94" y="424" font-size="11" fill="#1a1a1a" textLength="61.5" lengthAdjust="spacingAndGlyphs">Ideal_Opamp</text>
<rect x="59.5" y="432.5" width="8" height="8" fill="#f6f7f9" stroke="#8c9298"/>
<rect x="61" y="436" width="5" height="1" fill="#2a2a2a"/>
<rect x="63" y="434" width="1" height="5" fill="#2a2a2a"/>
<path d="M69,436h1v1h-1zM71,436h1v1h-1zM73,436h1v1h-1z" fill="#a0a0a0"/>
<circle cx="82" cy="436" r="6.2" fill="#fff" stroke="#000" stroke-width="1.7"/>
<path d="M82,431 l3,3 l-3,3 l-3,-3z" fill="#f4a818"/>
<path d="M79,435 l3,3 l-3,3 l-3,-3z" fill="#2aa0d8"/>
<path d="M85,436 l3,3 l-3,3 l-3,-3z" fill="#e81818"/>
<text x="94" y="440" font-size="11" fill="#1a1a1a" textLength="90.6" lengthAdjust="spacingAndGlyphs">Ideal_Sample&amp;Hold</text>
<rect x="59.5" y="448.5" width="8" height="8" fill="#f6f7f9" stroke="#8c9298"/>
<rect x="61" y="452" width="5" height="1" fill="#2a2a2a"/>
<rect x="63" y="450" width="1" height="5" fill="#2a2a2a"/>
<path d="M69,452h1v1h-1zM71,452h1v1h-1zM73,452h1v1h-1z" fill="#a0a0a0"/>
<circle cx="82" cy="452" r="6.2" fill="#fff" stroke="#000" stroke-width="1.7"/>
<path d="M82,447 l3,3 l-3,3 l-3,-3z" fill="#f4a818"/>
<path d="M79,451 l3,3 l-3,3 l-3,-3z" fill="#2aa0d8"/>
<path d="M85,452 l3,3 l-3,3 l-3,-3z" fill="#e81818"/>
<text x="94" y="456" font-size="11" fill="#1a1a1a" textLength="61.5" lengthAdjust="spacingAndGlyphs">Ideal_Switch</text>
<path d="M64,468h1v1h-1zM66,468h1v1h-1zM68,468h1v1h-1zM70,468h1v1h-1zM72,468h1v1h-1zM74,468h1v1h-1z" fill="#a0a0a0"/>
<circle cx="82" cy="468" r="5" fill="#ee0a0a"/>
<text x="94" y="472" font-size="11" fill="#1a1a1a" textLength="110" lengthAdjust="spacingAndGlyphs">sim_4bADC_DAC{sch}</text>
<path d="M64,484h1v1h-1zM66,484h1v1h-1zM68,484h1v1h-1zM70,484h1v1h-1zM72,484h1v1h-1zM74,484h1v1h-1z" fill="#a0a0a0"/>
<circle cx="82" cy="484" r="5" fill="#ee0a0a"/>
<text x="94" y="488" font-size="11" fill="#1a1a1a" textLength="97.7" lengthAdjust="spacingAndGlyphs">sim_ADC_DAC{sch}</text>
<path d="M64,500h1v1h-1zM66,500h1v1h-1zM68,500h1v1h-1zM70,500h1v1h-1zM72,500h1v1h-1zM74,500h1v1h-1z" fill="#a0a0a0"/>
<circle cx="82" cy="500" r="5" fill="#ee0a0a"/>
<text x="94" y="504" font-size="11" font-weight="bold" fill="#111" textLength="120.5" lengthAdjust="spacingAndGlyphs">sim_ADC_R2R_DAC{sc</text>
<rect x="40.5" y="512.5" width="8" height="8" fill="#f6f7f9" stroke="#8c9298"/>
<rect x="42" y="516" width="5" height="1" fill="#2a2a2a"/>
<rect x="44" y="514" width="1" height="5" fill="#2a2a2a"/>
<path d="M50,516h1v1h-1zM52,516h1v1h-1zM54,516h1v1h-1z" fill="#a0a0a0"/>
<rect x="56" y="510" width="3" height="13" fill="#a08020"/><rect x="57" y="512" width="1.5" height="6" fill="#208020"/><rect x="59" y="510" width="3" height="13" fill="#3ab0e0"/><rect x="62" y="510" width="3" height="13" fill="#6a2a9a"/><rect x="65" y="509" width="3" height="14" fill="#2030a0"/><rect x="68" y="509" width="2" height="14" fill="#102060"/><rect x="59.5" y="515" width="2" height="1.5" fill="#fff"/><rect x="65.5" y="514" width="2" height="1.5" fill="#fff"/>
<text x="75.6" y="520" font-size="11" fill="#1a1a1a" textLength="49.4" lengthAdjust="spacingAndGlyphs">spiceparts</text>
</g>
<rect x="216" y="124" width="16" height="400" fill="url(#gTrackV)"/>
<path d="M220,135 L224,131 L228,135 Z" fill="#3a3a3a"/>
<rect x="216.5" y="142.5" width="14" height="333" rx="2" fill="url(#gThumbV)" stroke="#9a9a9a"/>
<rect x="220" y="306" width="7" height="1" fill="#555"/>
<rect x="220" y="309" width="7" height="1" fill="#555"/>
<rect x="220" y="312" width="7" height="1" fill="#555"/>
<path d="M220,512 L224,516 L228,512 Z" fill="#3a3a3a"/>
<rect x="17" y="524" width="215" height="15" fill="url(#gTrackH)"/>
<path d="M26,527.5 L22,531.5 L26,535.5 Z" fill="#3a3a3a"/>
<rect x="35.5" y="524.5" width="149" height="14" rx="2" fill="url(#gThumbH)" stroke="#9a9a9a"/>
<rect x="106" y="528" width="1" height="7" fill="#555"/>
<rect x="109" y="528" width="1" height="7" fill="#555"/>
<rect x="112" y="528" width="1" height="7" fill="#555"/>
<path d="M205,527.5 L209,531.5 L205,535.5 Z" fill="#3a3a3a"/>
<rect x="216" y="524" width="16" height="15" fill="#f0f0f0"/>
<rect x="240" y="96" width="670" height="449" fill="#f0f0f0"/>
<rect x="240" y="96" width="653" height="432" fill="#fff"/>
<rect x="240" y="96" width="653" height="1" fill="#646464"/>
<rect x="240" y="96" width="1" height="449" fill="#646464"/>
<rect x="234" y="96" width="6" height="448" fill="#f4f4f4"/>
<rect x="240" y="96" width="1" height="449" fill="#646464"/>
<g clip-path="url(#cCanvas)">
<defs><path id="dr" d="M245,0h1v1h-1zM253,0h1v1h-1zM262,0h1v1h-1zM271,0h1v1h-1zM280,0h1v1h-1zM289,0h1v1h-1zM298,0h1v1h-1zM307,0h1v1h-1zM316,0h1v1h-1zM325,0h1v1h-1zM334,0h1v1h-1zM342,0h1v1h-1zM351,0h1v1h-1zM360,0h1v1h-1zM369,0h1v1h-1zM378,0h1v1h-1zM387,0h1v1h-1zM396,0h1v1h-1zM405,0h1v1h-1zM414,0h1v1h-1zM423,0h1v1h-1zM431,0h1v1h-1zM440,0h1v1h-1zM449,0h1v1h-1zM458,0h1v1h-1zM467,0h1v1h-1zM476,0h1v1h-1zM485,0h1v1h-1zM494,0h1v1h-1zM503,0h1v1h-1zM511,0h1v1h-1zM520,0h1v1h-1zM529,0h1v1h-1zM538,0h1v1h-1zM547,0h1v1h-1zM556,0h1v1h-1zM565,0h1v1h-1zM574,0h1v1h-1zM583,0h1v1h-1zM592,0h1v1h-1zM600,0h1v1h-1zM609,0h1v1h-1zM618,0h1v1h-1zM627,0h1v1h-1zM636,0h1v1h-1zM645,0h1v1h-1zM654,0h1v1h-1zM663,0h1v1h-1zM672,0h1v1h-1zM681,0h1v1h-1zM689,0h1v1h-1zM698,0h1v1h-1zM707,0h1v1h-1zM716,0h1v1h-1zM725,0h1v1h-1zM734,0h1v1h-1zM743,0h1v1h-1zM752,0h1v1h-1zM761,0h1v1h-1zM769,0h1v1h-1zM778,0h1v1h-1zM787,0h1v1h-1zM796,0h1v1h-1zM805,0h1v1h-1zM814,0h1v1h-1zM823,0h1v1h-1zM832,0h1v1h-1zM841,0h1v1h-1zM850,0h1v1h-1zM858,0h1v1h-1zM867,0h1v1h-1zM876,0h1v1h-1zM885,0h1v1h-1z"/></defs>
<g fill="#000">
<use href="#dr" y="103"/>
<use href="#dr" y="112"/>
<use href="#dr" y="121"/>
<use href="#dr" y="130"/>
<use href="#dr" y="139"/>
<use href="#dr" y="147"/>
<use href="#dr" y="156"/>
<use href="#dr" y="165"/>
<use href="#dr" y="174"/>
<use href="#dr" y="183"/>
<use href="#dr" y="192"/>
<use href="#dr" y="201"/>
<use href="#dr" y="210"/>
<use href="#dr" y="219"/>
<use href="#dr" y="227"/>
<use href="#dr" y="236"/>
<use href="#dr" y="245"/>
<use href="#dr" y="254"/>
<use href="#dr" y="263"/>
<use href="#dr" y="272"/>
<use href="#dr" y="281"/>
<use href="#dr" y="290"/>
<use href="#dr" y="299"/>
<use href="#dr" y="308"/>
<use href="#dr" y="316"/>
<use href="#dr" y="325"/>
<use href="#dr" y="334"/>
<use href="#dr" y="343"/>
<use href="#dr" y="352"/>
<use href="#dr" y="361"/>
<use href="#dr" y="370"/>
<use href="#dr" y="379"/>
<use href="#dr" y="388"/>
<use href="#dr" y="397"/>
<use href="#dr" y="405"/>
<use href="#dr" y="414"/>
<use href="#dr" y="423"/>
<use href="#dr" y="432"/>
<use href="#dr" y="441"/>
<use href="#dr" y="450"/>
<use href="#dr" y="459"/>
<use href="#dr" y="468"/>
<use href="#dr" y="477"/>
<use href="#dr" y="486"/>
<use href="#dr" y="494"/>
<use href="#dr" y="503"/>
<use href="#dr" y="512"/>
<use href="#dr" y="521"/>
</g>
<path d="M261,174h3v1h-3zM262,173h1v3h-1zM261,263h3v1h-3zM262,262h1v3h-1zM261,352h3v1h-3zM262,351h1v3h-1zM261,441h3v1h-3zM262,440h1v3h-1zM350,174h3v1h-3zM351,173h1v3h-1zM350,263h3v1h-3zM351,262h1v3h-1zM350,352h3v1h-3zM351,351h1v3h-1zM350,441h3v1h-3zM351,440h1v3h-1zM439,174h3v1h-3zM440,173h1v3h-1zM439,263h3v1h-3zM440,262h1v3h-1zM439,352h3v1h-3zM440,351h1v3h-1zM439,441h3v1h-3zM440,440h1v3h-1zM528,174h3v1h-3zM529,173h1v3h-1zM528,263h3v1h-3zM529,262h1v3h-1zM528,352h3v1h-3zM529,351h1v3h-1zM528,441h3v1h-3zM529,440h1v3h-1zM617,174h3v1h-3zM618,173h1v3h-1zM617,263h3v1h-3zM618,262h1v3h-1zM617,352h3v1h-3zM618,351h1v3h-1zM617,441h3v1h-3zM618,440h1v3h-1zM706,174h3v1h-3zM707,173h1v3h-1zM706,263h3v1h-3zM707,262h1v3h-1zM706,352h3v1h-3zM707,351h1v3h-1zM706,441h3v1h-3zM707,440h1v3h-1zM795,174h3v1h-3zM796,173h1v3h-1zM795,263h3v1h-3zM796,262h1v3h-1zM795,352h3v1h-3zM796,351h1v3h-1zM795,441h3v1h-3zM796,440h1v3h-1zM884,174h3v1h-3zM885,173h1v3h-1zM884,263h3v1h-3zM885,262h1v3h-1zM884,352h3v1h-3zM885,351h1v3h-1zM884,441h3v1h-3zM885,440h1v3h-1z" fill="#000"/>
<polygon points="471.35,155.94 467.90,161.90 461.94,165.35 455.06,165.35 449.10,161.90 445.65,155.94 445.65,149.06 449.10,143.10 455.06,139.65 461.94,139.65 467.90,143.10 471.35,149.06" fill="none" stroke="#b02828" stroke-width="1"/>
<polygon points="468.45,155.17 465.78,159.78 461.17,162.45 455.83,162.45 451.22,159.78 448.55,155.17 448.55,149.83 451.22,145.22 455.83,142.55 461.17,142.55 465.78,145.22 468.45,149.83" fill="none" stroke="#b02828" stroke-width="1"/>
<polygon points="666.22,136.18 662.54,142.54 656.18,146.22 648.82,146.22 642.46,142.54 638.78,136.18 638.78,128.82 642.46,122.46 648.82,118.78 656.18,118.78 662.54,122.46 666.22,128.82" fill="none" stroke="#b02828" stroke-width="1"/>
<polygon points="662.45,135.17 659.78,139.78 655.17,142.45 649.83,142.45 645.22,139.78 642.55,135.17 642.55,129.83 645.22,125.22 649.83,122.55 655.17,122.55 659.78,125.22 662.45,129.83" fill="none" stroke="#b02828" stroke-width="1"/>
<rect x="458" y="152" width="1" height="44" fill="#1c1c8c"/>
<rect x="652" y="132" width="1" height="58" fill="#1c1c8c"/>
<path d="M409.5,196.5 H500.5 V394.5 H409.5 Z" fill="none" stroke="#000" stroke-width="3" stroke-linejoin="round"/>
<path d="M603.5,190.5 H694.5 V388.5 H603.5 Z" fill="none" stroke="#000" stroke-width="3" stroke-linejoin="round"/>
<rect x="502" y="210" width="100" height="1" fill="#1c1c8c"/>
<rect x="502" y="227" width="100" height="1" fill="#1c1c8c"/>
<rect x="502" y="245" width="100" height="1" fill="#1c1c8c"/>
<rect x="502" y="263" width="100" height="1" fill="#1c1c8c"/>
<rect x="502" y="281" width="100" height="1" fill="#1c1c8c"/>
<rect x="502" y="299" width="100" height="1" fill="#1c1c8c"/>
<rect x="502" y="316" width="100" height="1" fill="#1c1c8c"/>
<rect x="502" y="334" width="100" height="1" fill="#1c1c8c"/>
<rect x="502" y="352" width="100" height="1" fill="#1c1c8c"/>
<rect x="502" y="370" width="100" height="1" fill="#1c1c8c"/>
<rect x="334" y="290" width="74" height="1" fill="#1c1c8c"/>
<rect x="696" y="285" width="103" height="1" fill="#1c1c8c"/>
<rect x="425" y="396" width="1" height="28" fill="#1c1c8c"/>
<rect x="454" y="396" width="1" height="28" fill="#1c1c8c"/>
<rect x="487" y="396" width="1" height="28" fill="#1c1c8c"/>
<text x="451" y="205.5" font-size="8.5" fill="#262626" textLength="15.0" lengthAdjust="spacingAndGlyphs">VDD</text>
<text x="487.3" y="212.5" font-size="8.5" fill="#262626" textLength="9.2" lengthAdjust="spacingAndGlyphs">B9</text>
<text x="487.3" y="229.5" font-size="8.5" fill="#262626" textLength="9.2" lengthAdjust="spacingAndGlyphs">B8</text>
<text x="487.3" y="247.5" font-size="8.5" fill="#262626" textLength="9.2" lengthAdjust="spacingAndGlyphs">B7</text>
<text x="487.3" y="265.5" font-size="8.5" fill="#262626" textLength="9.2" lengthAdjust="spacingAndGlyphs">B6</text>
<text x="487.3" y="283.5" font-size="8.5" fill="#262626" textLength="9.2" lengthAdjust="spacingAndGlyphs">B5</text>
<text x="487.3" y="301.5" font-size="8.5" fill="#262626" textLength="9.2" lengthAdjust="spacingAndGlyphs">B4</text>
<text x="487.3" y="318.5" font-size="8.5" fill="#262626" textLength="9.2" lengthAdjust="spacingAndGlyphs">B3</text>
<text x="487.3" y="336.5" font-size="8.5" fill="#262626" textLength="9.2" lengthAdjust="spacingAndGlyphs">B2</text>
<text x="487.3" y="354.5" font-size="8.5" fill="#262626" textLength="9.2" lengthAdjust="spacingAndGlyphs">B1</text>
<text x="487.3" y="372.5" font-size="8.5" fill="#262626" textLength="9.2" lengthAdjust="spacingAndGlyphs">B0</text>
<text x="414.7" y="293" font-size="8.5" fill="#262626" textLength="11.8" lengthAdjust="spacingAndGlyphs">Vin</text>
<text x="413.8" y="390" font-size="8.5" fill="#262626" textLength="18.2" lengthAdjust="spacingAndGlyphs">clock</text>
<text x="438" y="390" font-size="8.5" fill="#262626" textLength="25.6" lengthAdjust="spacingAndGlyphs">VREFP</text>
<text x="471.4" y="390" font-size="8.5" fill="#262626" textLength="26.4" lengthAdjust="spacingAndGlyphs">VREFM</text>
<text x="415.6" y="417" font-size="8.5" fill="#262626" textLength="18.2" lengthAdjust="spacingAndGlyphs">clock</text>
<text x="446.2" y="417" font-size="8.5" fill="#262626" textLength="15.8" lengthAdjust="spacingAndGlyphs">VDD</text>
<text x="479" y="417" font-size="8.5" fill="#262626" textLength="17.0" lengthAdjust="spacingAndGlyphs">GND</text>
<text x="357.2" y="293" font-size="8.5" fill="#30306a" textLength="10.8" lengthAdjust="spacingAndGlyphs">Vin</text>
<text x="643.8" y="201.5" font-size="8.5" fill="#262626" textLength="16.2" lengthAdjust="spacingAndGlyphs">VDD</text>
<text x="609.5" y="212.5" font-size="8.5" fill="#262626" textLength="10.0" lengthAdjust="spacingAndGlyphs">B9</text>
<text x="609.5" y="229.5" font-size="8.5" fill="#262626" textLength="10.0" lengthAdjust="spacingAndGlyphs">B8</text>
<text x="609.5" y="247.5" font-size="8.5" fill="#262626" textLength="10.0" lengthAdjust="spacingAndGlyphs">B7</text>
<text x="609.5" y="265.5" font-size="8.5" fill="#262626" textLength="10.0" lengthAdjust="spacingAndGlyphs">B6</text>
<text x="609.5" y="283.5" font-size="8.5" fill="#262626" textLength="10.0" lengthAdjust="spacingAndGlyphs">B5</text>
<text x="609.5" y="301.5" font-size="8.5" fill="#262626" textLength="10.0" lengthAdjust="spacingAndGlyphs">B4</text>
<text x="609.5" y="318.5" font-size="8.5" fill="#262626" textLength="10.0" lengthAdjust="spacingAndGlyphs">B3</text>
<text x="609.5" y="336.5" font-size="8.5" fill="#262626" textLength="10.0" lengthAdjust="spacingAndGlyphs">B2</text>
<text x="609.5" y="354.5" font-size="8.5" fill="#262626" textLength="10.0" lengthAdjust="spacingAndGlyphs">B1</text>
<text x="609.5" y="372.5" font-size="8.5" fill="#262626" textLength="10.0" lengthAdjust="spacingAndGlyphs">B0</text>
<text x="675.2" y="288" font-size="8.5" fill="#262626" textLength="15.7" lengthAdjust="spacingAndGlyphs">Vout</text>
<text x="756.6" y="288" font-size="8.5" fill="#30306a" textLength="15.7" lengthAdjust="spacingAndGlyphs">Vout</text>
<text x="542" y="211.8" font-size="8.5" fill="#30306a" textLength="9.3" lengthAdjust="spacingAndGlyphs">B9</text>
<text x="542" y="228.8" font-size="8.5" fill="#30306a" textLength="9.3" lengthAdjust="spacingAndGlyphs">B8</text>
<text x="544" y="246.8" font-size="8.5" fill="#30306a" textLength="9.3" lengthAdjust="spacingAndGlyphs">B7</text>
<text x="540" y="264.8" font-size="8.5" fill="#30306a" textLength="9.3" lengthAdjust="spacingAndGlyphs">B6</text>
<text x="542" y="282.8" font-size="8.5" fill="#30306a" textLength="9.3" lengthAdjust="spacingAndGlyphs">B5</text>
<text x="540" y="300.8" font-size="8.5" fill="#30306a" textLength="9.3" lengthAdjust="spacingAndGlyphs">B4</text>
<text x="540" y="317.8" font-size="8.5" fill="#30306a" textLength="9.3" lengthAdjust="spacingAndGlyphs">B3</text>
<text x="542" y="335.8" font-size="8.5" fill="#30306a" textLength="9.3" lengthAdjust="spacingAndGlyphs">B2</text>
<text x="540" y="353.8" font-size="8.5" fill="#30306a" textLength="8.7" lengthAdjust="spacingAndGlyphs">B1</text>
<text x="538" y="371.8" font-size="8.5" fill="#30306a" textLength="9.3" lengthAdjust="spacingAndGlyphs">B0</text>
<text transform="translate(458,324.5) rotate(-90)" x="0" y="0" font-size="8.5" fill="#3c3c3c" textLength="59.6" lengthAdjust="spacingAndGlyphs">10Bit_Ideal_ADC</text>
<text transform="translate(650.6,319.7) rotate(-90)" x="0" y="0" font-size="8.5" fill="#3c3c3c" textLength="58.9" lengthAdjust="spacingAndGlyphs">4Bit_R_2R_DAC</text>
<text x="501.3" y="440.5" font-size="8.5" fill="#262626" textLength="62.9" lengthAdjust="spacingAndGlyphs">VDD VDD 0 DC 5</text>
<text x="498" y="450.5" font-size="8.5" fill="#262626" textLength="68.6" lengthAdjust="spacingAndGlyphs">Vtrip Vtrip 0 DC 2.5</text>
<text x="497" y="458.5" font-size="8.5" fill="#262626" textLength="69.6" lengthAdjust="spacingAndGlyphs">VGND GND 0 DC 0</text>
<text x="468.2" y="467" font-size="8.5" fill="#262626" textLength="127.6" lengthAdjust="spacingAndGlyphs">Vin Vin 0 DC 0 SINE(2.5 2.5 2MEG)</text>
<text x="432.2" y="476" font-size="8.5" fill="#262626" textLength="199.1" lengthAdjust="spacingAndGlyphs">Vclock clock 0 DC 0 PULSE(0 5 1n 100p 100p 4.9n 10n)</text>
<text x="507.8" y="485.5" font-size="8.5" fill="#262626" textLength="48.0" lengthAdjust="spacingAndGlyphs">*.options post</text>
<text x="494.6" y="494" font-size="8.5" fill="#262626" textLength="76.3" lengthAdjust="spacingAndGlyphs">.options plotwinsize=0</text>
<text x="491" y="503.5" font-size="8.5" fill="#262626" textLength="84.0" lengthAdjust="spacingAndGlyphs">.tran 10p 2u 10p .1n uic</text>
<rect x="525" y="441" width="10" height="1" fill="#000"/><rect x="529" y="437" width="1" height="10" fill="#000"/>
</g>
<rect x="893" y="97" width="16" height="431" fill="url(#gTrackV)"/>
<path d="M897,108 L901,104 L905,108 Z" fill="#3a3a3a"/>
<rect x="893.5" y="186.5" width="14" height="278" rx="2" fill="url(#gThumbV)" stroke="#979797"/>
<rect x="897" y="322" width="7" height="1" fill="#444"/>
<rect x="897" y="325" width="7" height="1" fill="#444"/>
<rect x="897" y="328" width="7" height="1" fill="#444"/>
<path d="M897,516 L901,520 L905,516 Z" fill="#3a3a3a"/>
<rect x="241" y="528" width="652" height="16" fill="url(#gTrackH)"/>
<path d="M251,532 L247,536 L251,540 Z" fill="#3a3a3a"/>
<rect x="347.5" y="528.5" width="437" height="14" rx="2" fill="url(#gThumbH)" stroke="#979797"/>
<rect x="562" y="532" width="1" height="7" fill="#444"/>
<rect x="565" y="532" width="1" height="7" fill="#444"/>
<rect x="568" y="532" width="1" height="7" fill="#444"/>
<path d="M881,532 L885,536 L881,540 Z" fill="#3a3a3a"/>
<rect x="893" y="528" width="16" height="16" fill="#f0f0f0"/>
<rect x="5" y="546" width="910" height="1" fill="#4a9aaa"/>
<rect x="5" y="547" width="911" height="1" fill="#101820"/>
<rect x="5" y="548" width="908" height="122" fill="#d6e2ef"/>
<rect x="5" y="548" width="908" height="27" fill="url(#gMsgT)"/>
<path d="M13.0,555.5 H22.0 L24.5,558.0 V565.0 L22.0,567.5 H13.0 L10.5,565.0 V558.0 Z" fill="#8a8080" stroke="#111" stroke-width="1.2"/>
<ellipse cx="14.22" cy="560.11" rx="1.78" ry="2.79" fill="#c83030"/>
<ellipse cx="20.78" cy="560.11" rx="1.78" ry="2.79" fill="#c83030"/>
<ellipse cx="17.50" cy="564.56" rx="1.88" ry="1.49" fill="#c83030"/>
<text x="28" y="566" font-size="12.5" fill="#5d6a7a" textLength="103" lengthAdjust="spacingAndGlyphs">Electric Messages</text>
<rect x="856.5" y="554.5" width="27" height="16" rx="2" fill="url(#gBtn)" stroke="#7d8fa6"/>
<rect x="865.0" y="563.0" width="10" height="4" rx="1" fill="#fff" stroke="#2a2a2a" stroke-width="1"/>
<rect x="886.5" y="554.5" width="26" height="16" rx="2" fill="url(#gBtn)" stroke="#7d8fa6"/>
<rect x="895.0" y="559.0" width="9.5" height="8" rx="1" fill="#fff" stroke="#2a2a2a" stroke-width="1"/>
<rect x="897.3" y="561.0" width="5" height="3" fill="#fff" stroke="#2a2a2a" stroke-width="1"/>
<rect x="12.5" y="574.5" width="897" height="93" fill="#fff" stroke="#8a8a8a"/>
<text x="33.5" y="585" font-size="12" font-family="Liberation Serif" fill="#111" stroke="#111" stroke-width="0.12" textLength="5.1" lengthAdjust="spacingAndGlyphs">N</text>
<text x="39.5" y="585" font-size="12" font-family="Liberation Serif" fill="#111" stroke="#111" stroke-width="0.12" textLength="5.1" lengthAdjust="spacingAndGlyphs">o</text>
<text x="51.5" y="585" font-size="12" font-family="Liberation Serif" fill="#111" stroke="#111" stroke-width="0.12" textLength="5.1" lengthAdjust="spacingAndGlyphs">e</text>
<text x="69.5" y="585" font-size="12" font-family="Liberation Serif" fill="#111" stroke="#111" stroke-width="0.12" textLength="5.1" lengthAdjust="spacingAndGlyphs">o</text>
<text x="99.5" y="585" font-size="12" font-family="Liberation Serif" fill="#111" stroke="#111" stroke-width="0.12" textLength="5.1" lengthAdjust="spacingAndGlyphs">o</text>
<text x="105.5" y="585" font-size="12" font-family="Liberation Serif" fill="#111" stroke="#111" stroke-width="0.12" textLength="5.1" lengthAdjust="spacingAndGlyphs">u</text>
<text x="111.5" y="585" font-size="12" font-family="Liberation Serif" fill="#111" stroke="#111" stroke-width="0.12" textLength="5.1" lengthAdjust="spacingAndGlyphs">n</text>
<text x="117.5" y="585" font-size="12" font-family="Liberation Serif" fill="#111" stroke="#111" stroke-width="0.12" textLength="5.1" lengthAdjust="spacingAndGlyphs">d</text>
<text x="58.0 64.0 76.0 81.7 94.0" y="585" font-size="12" font-family="Liberation Serif" fill="#111" stroke="#111" stroke-width="0.12">rrrsf</text>
<text x="15.4" y="604" font-size="12" font-family="Liberation Serif" fill="#111" stroke="#111" stroke-width="0.12" textLength="5.1" lengthAdjust="spacingAndGlyphs">0</text>
<text x="27.4" y="604" font-size="12" font-family="Liberation Serif" fill="#111" stroke="#111" stroke-width="0.12" textLength="5.1" lengthAdjust="spacingAndGlyphs">e</text>
<text x="45.5" y="604" font-size="12" font-family="Liberation Serif" fill="#111" stroke="#111" stroke-width="0.12" textLength="5.1" lengthAdjust="spacingAndGlyphs">o</text>
<text x="69.5" y="604" font-size="12" font-family="Liberation Serif" fill="#111" stroke="#111" stroke-width="0.12" textLength="5.1" lengthAdjust="spacingAndGlyphs">a</text>
<text x="75.5" y="604" font-size="12" font-family="Liberation Serif" fill="#111" stroke="#111" stroke-width="0.12" textLength="5.1" lengthAdjust="spacingAndGlyphs">n</text>
<text x="81.5" y="604" font-size="12" font-family="Liberation Serif" fill="#111" stroke="#111" stroke-width="0.12" textLength="5.1" lengthAdjust="spacingAndGlyphs">d</text>
<text x="93.5" y="604" font-size="12" font-family="Liberation Serif" fill="#111" stroke="#111" stroke-width="0.12" textLength="5.1" lengthAdjust="spacingAndGlyphs">2</text>
<text x="105.5" y="604" font-size="12" font-family="Liberation Serif" fill="#111" stroke="#111" stroke-width="0.12" textLength="5.1" lengthAdjust="spacingAndGlyphs">w</text>
<text x="111.5" y="604" font-size="12" font-family="Liberation Serif" fill="#111" stroke="#111" stroke-width="0.12" textLength="5.1" lengthAdjust="spacingAndGlyphs">a</text>
<text x="123.5" y="604" font-size="12" font-family="Liberation Serif" fill="#111" stroke="#111" stroke-width="0.12" textLength="5.1" lengthAdjust="spacingAndGlyphs">n</text>
<text x="135.4" y="604" font-size="12" font-family="Liberation Serif" fill="#111" stroke="#111" stroke-width="0.12" textLength="5.1" lengthAdjust="spacingAndGlyphs">n</text>
<text x="141.4" y="604" font-size="12" font-family="Liberation Serif" fill="#111" stroke="#111" stroke-width="0.12" textLength="5.1" lengthAdjust="spacingAndGlyphs">g</text>
<text x="165.4" y="604" font-size="12" font-family="Liberation Serif" fill="#111" stroke="#111" stroke-width="0.12" textLength="5.1" lengthAdjust="spacingAndGlyphs">o</text>
<text x="171.4" y="604" font-size="12" font-family="Liberation Serif" fill="#111" stroke="#111" stroke-width="0.12" textLength="5.1" lengthAdjust="spacingAndGlyphs">u</text>
<text x="177.4" y="604" font-size="12" font-family="Liberation Serif" fill="#111" stroke="#111" stroke-width="0.12" textLength="5.1" lengthAdjust="spacingAndGlyphs">n</text>
<text x="183.4" y="604" font-size="12" font-family="Liberation Serif" fill="#111" stroke="#111" stroke-width="0.12" textLength="5.1" lengthAdjust="spacingAndGlyphs">d</text>
<text x="207.4" y="604" font-size="12" font-family="Liberation Serif" fill="#111" stroke="#111" stroke-width="0.12" textLength="5.1" lengthAdjust="spacingAndGlyphs">o</text>
<text x="213.4" y="604" font-size="12" font-family="Liberation Serif" fill="#111" stroke="#111" stroke-width="0.12" textLength="5.1" lengthAdjust="spacingAndGlyphs">o</text>
<text x="219.4" y="604" font-size="12" font-family="Liberation Serif" fill="#111" stroke="#111" stroke-width="0.12" textLength="5.1" lengthAdjust="spacingAndGlyphs">k</text>
<text x="231.4" y="604" font-size="12" font-family="Liberation Serif" fill="#111" stroke="#111" stroke-width="0.12" textLength="5.1" lengthAdjust="spacingAndGlyphs">0</text>
<text x="243.4" y="604" font-size="12" font-family="Liberation Serif" fill="#111" stroke="#111" stroke-width="0.12" textLength="5.1" lengthAdjust="spacingAndGlyphs">0</text>
<text x="249.4" y="604" font-size="12" font-family="Liberation Serif" fill="#111" stroke="#111" stroke-width="0.12" textLength="5.1" lengthAdjust="spacingAndGlyphs">0</text>
<text x="255.4" y="604" font-size="12" font-family="Liberation Serif" fill="#111" stroke="#111" stroke-width="0.12" textLength="5.1" lengthAdjust="spacingAndGlyphs">9</text>
<text x="261.4" y="604" font-size="12" font-family="Liberation Serif" fill="#111" stroke="#111" stroke-width="0.12" textLength="5.1" lengthAdjust="spacingAndGlyphs">0</text>
<text x="279.4" y="604" font-size="12" font-family="Liberation Serif" fill="#111" stroke="#111" stroke-width="0.12" textLength="5.1" lengthAdjust="spacingAndGlyphs">e</text>
<text x="285.4" y="604" font-size="12" font-family="Liberation Serif" fill="#111" stroke="#111" stroke-width="0.12" textLength="5.1" lengthAdjust="spacingAndGlyphs">c</text>
<text x="34.0 40.0 52.0 57.7 118.0 130.3 147.7 160.0 196.0 202.3 238.5 273.7 291.7 298.0" y="604" font-size="12" font-family="Liberation Serif" fill="#111" stroke="#111" stroke-width="0.12">rrrsrisf(t.ss)</text>
<text x="15.4" y="623" font-size="12" font-family="Liberation Serif" fill="#111" stroke="#111" stroke-width="0.12" textLength="5.1" lengthAdjust="spacingAndGlyphs">S</text>
<text x="21.4" y="623" font-size="12" font-family="Liberation Serif" fill="#111" stroke="#111" stroke-width="0.12" textLength="5.1" lengthAdjust="spacingAndGlyphs">c</text>
<text x="27.4" y="623" font-size="12" font-family="Liberation Serif" fill="#111" stroke="#111" stroke-width="0.12" textLength="5.1" lengthAdjust="spacingAndGlyphs">h</text>
<text x="33.5" y="623" font-size="12" font-family="Liberation Serif" fill="#111" stroke="#111" stroke-width="0.12" textLength="5.1" lengthAdjust="spacingAndGlyphs">e</text>
<text x="39.5" y="623" font-size="12" font-family="Liberation Serif" fill="#111" stroke="#111" stroke-width="0.12" textLength="5.1" lengthAdjust="spacingAndGlyphs">m</text>
<text x="45.5" y="623" font-size="12" font-family="Liberation Serif" fill="#111" stroke="#111" stroke-width="0.12" textLength="5.1" lengthAdjust="spacingAndGlyphs">a</text>
<text x="63.5" y="623" font-size="12" font-family="Liberation Serif" fill="#111" stroke="#111" stroke-width="0.12" textLength="5.1" lengthAdjust="spacingAndGlyphs">c</text>
<text x="75.5" y="623" font-size="12" font-family="Liberation Serif" fill="#111" stroke="#111" stroke-width="0.12" textLength="5.1" lengthAdjust="spacingAndGlyphs">D</text>
<text x="81.5" y="623" font-size="12" font-family="Liberation Serif" fill="#111" stroke="#111" stroke-width="0.12" textLength="5.1" lengthAdjust="spacingAndGlyphs">R</text>
<text x="87.5" y="623" font-size="12" font-family="Liberation Serif" fill="#111" stroke="#111" stroke-width="0.12" textLength="5.1" lengthAdjust="spacingAndGlyphs">C</text>
<text x="111.5" y="623" font-size="12" font-family="Liberation Serif" fill="#111" stroke="#111" stroke-width="0.12" textLength="5.1" lengthAdjust="spacingAndGlyphs">u</text>
<text x="147.4" y="623" font-size="12" font-family="Liberation Serif" fill="#111" stroke="#111" stroke-width="0.12" textLength="5.1" lengthAdjust="spacingAndGlyphs">o</text>
<text x="153.4" y="623" font-size="12" font-family="Liberation Serif" fill="#111" stroke="#111" stroke-width="0.12" textLength="5.1" lengthAdjust="spacingAndGlyphs">u</text>
<text x="159.4" y="623" font-size="12" font-family="Liberation Serif" fill="#111" stroke="#111" stroke-width="0.12" textLength="5.1" lengthAdjust="spacingAndGlyphs">n</text>
<text x="165.4" y="623" font-size="12" font-family="Liberation Serif" fill="#111" stroke="#111" stroke-width="0.12" textLength="5.1" lengthAdjust="spacingAndGlyphs">d</text>
<text x="177.4" y="623" font-size="12" font-family="Liberation Serif" fill="#111" stroke="#111" stroke-width="0.12" textLength="5.1" lengthAdjust="spacingAndGlyphs">0</text>
<text x="189.4" y="623" font-size="12" font-family="Liberation Serif" fill="#111" stroke="#111" stroke-width="0.12" textLength="5.1" lengthAdjust="spacingAndGlyphs">e</text>
<text x="207.4" y="623" font-size="12" font-family="Liberation Serif" fill="#111" stroke="#111" stroke-width="0.12" textLength="5.1" lengthAdjust="spacingAndGlyphs">o</text>
<text x="237.4" y="623" font-size="12" font-family="Liberation Serif" fill="#111" stroke="#111" stroke-width="0.12" textLength="5.1" lengthAdjust="spacingAndGlyphs">2</text>
<text x="249.4" y="623" font-size="12" font-family="Liberation Serif" fill="#111" stroke="#111" stroke-width="0.12" textLength="5.1" lengthAdjust="spacingAndGlyphs">w</text>
<text x="255.4" y="623" font-size="12" font-family="Liberation Serif" fill="#111" stroke="#111" stroke-width="0.12" textLength="5.1" lengthAdjust="spacingAndGlyphs">a</text>
<text x="267.4" y="623" font-size="12" font-family="Liberation Serif" fill="#111" stroke="#111" stroke-width="0.12" textLength="5.1" lengthAdjust="spacingAndGlyphs">n</text>
<text x="279.4" y="623" font-size="12" font-family="Liberation Serif" fill="#111" stroke="#111" stroke-width="0.12" textLength="5.1" lengthAdjust="spacingAndGlyphs">n</text>
<text x="285.4" y="623" font-size="12" font-family="Liberation Serif" fill="#111" stroke="#111" stroke-width="0.12" textLength="5.1" lengthAdjust="spacingAndGlyphs">g</text>
<text x="52.3 58.3 100.0 106.0 118.3 124.3 130.0 142.0 196.0 202.0 214.0 219.7 226.5 262.0 274.3 291.7 298.0" y="623" font-size="12" font-family="Liberation Serif" fill="#111" stroke="#111" stroke-width="0.12">ti(fll)frrrs,ris!</text>
<text x="15.4" y="642" font-size="12" font-family="Liberation Serif" fill="#111" stroke="#111" stroke-width="0.12" textLength="5.1" lengthAdjust="spacingAndGlyphs">T</text>
<text x="21.4" y="642" font-size="12" font-family="Liberation Serif" fill="#111" stroke="#111" stroke-width="0.12" textLength="5.1" lengthAdjust="spacingAndGlyphs">y</text>
<text x="27.4" y="642" font-size="12" font-family="Liberation Serif" fill="#111" stroke="#111" stroke-width="0.12" textLength="5.1" lengthAdjust="spacingAndGlyphs">p</text>
<text x="33.5" y="642" font-size="12" font-family="Liberation Serif" fill="#111" stroke="#111" stroke-width="0.12" textLength="5.1" lengthAdjust="spacingAndGlyphs">e</text>
<text x="45.5" y="642" font-size="12" font-family="Liberation Serif" fill="#111" stroke="#111" stroke-width="0.12" textLength="5.1" lengthAdjust="spacingAndGlyphs">&gt;</text>
<text x="57.5" y="642" font-size="12" font-family="Liberation Serif" fill="#111" stroke="#111" stroke-width="0.12" textLength="5.1" lengthAdjust="spacingAndGlyphs">a</text>
<text x="63.5" y="642" font-size="12" font-family="Liberation Serif" fill="#111" stroke="#111" stroke-width="0.12" textLength="5.1" lengthAdjust="spacingAndGlyphs">n</text>
<text x="69.5" y="642" font-size="12" font-family="Liberation Serif" fill="#111" stroke="#111" stroke-width="0.12" textLength="5.1" lengthAdjust="spacingAndGlyphs">d</text>
<text x="81.5" y="642" font-size="12" font-family="Liberation Serif" fill="#111" stroke="#111" stroke-width="0.12" textLength="5.1" lengthAdjust="spacingAndGlyphs">&lt;</text>
<text x="99.5" y="642" font-size="12" font-family="Liberation Serif" fill="#111" stroke="#111" stroke-width="0.12" textLength="5.1" lengthAdjust="spacingAndGlyphs">o</text>
<text x="123.5" y="642" font-size="12" font-family="Liberation Serif" fill="#111" stroke="#111" stroke-width="0.12" textLength="5.1" lengthAdjust="spacingAndGlyphs">e</text>
<text x="129.4" y="642" font-size="12" font-family="Liberation Serif" fill="#111" stroke="#111" stroke-width="0.12" textLength="5.1" lengthAdjust="spacingAndGlyphs">p</text>
<text x="147.4" y="642" font-size="12" font-family="Liberation Serif" fill="#111" stroke="#111" stroke-width="0.12" textLength="5.1" lengthAdjust="spacingAndGlyphs">h</text>
<text x="159.4" y="642" font-size="12" font-family="Liberation Serif" fill="#111" stroke="#111" stroke-width="0.12" textLength="5.1" lengthAdjust="spacingAndGlyphs">o</text>
<text x="165.4" y="642" font-size="12" font-family="Liberation Serif" fill="#111" stroke="#111" stroke-width="0.12" textLength="5.1" lengthAdjust="spacingAndGlyphs">u</text>
<text x="171.4" y="642" font-size="12" font-family="Liberation Serif" fill="#111" stroke="#111" stroke-width="0.12" textLength="5.1" lengthAdjust="spacingAndGlyphs">g</text>
<text x="177.4" y="642" font-size="12" font-family="Liberation Serif" fill="#111" stroke="#111" stroke-width="0.12" textLength="5.1" lengthAdjust="spacingAndGlyphs">h</text>
<text x="189.4" y="642" font-size="12" font-family="Liberation Serif" fill="#111" stroke="#111" stroke-width="0.12" textLength="5.1" lengthAdjust="spacingAndGlyphs">w</text>
<text x="195.4" y="642" font-size="12" font-family="Liberation Serif" fill="#111" stroke="#111" stroke-width="0.12" textLength="5.1" lengthAdjust="spacingAndGlyphs">a</text>
<text x="207.4" y="642" font-size="12" font-family="Liberation Serif" fill="#111" stroke="#111" stroke-width="0.12" textLength="5.1" lengthAdjust="spacingAndGlyphs">n</text>
<text x="219.4" y="642" font-size="12" font-family="Liberation Serif" fill="#111" stroke="#111" stroke-width="0.12" textLength="5.1" lengthAdjust="spacingAndGlyphs">n</text>
<text x="225.4" y="642" font-size="12" font-family="Liberation Serif" fill="#111" stroke="#111" stroke-width="0.12" textLength="5.1" lengthAdjust="spacingAndGlyphs">g</text>
<text x="249.4" y="642" font-size="12" font-family="Liberation Serif" fill="#111" stroke="#111" stroke-width="0.12" textLength="5.1" lengthAdjust="spacingAndGlyphs">o</text>
<text x="267.4" y="642" font-size="12" font-family="Liberation Serif" fill="#111" stroke="#111" stroke-width="0.12" textLength="5.1" lengthAdjust="spacingAndGlyphs">o</text>
<text x="273.4" y="642" font-size="12" font-family="Liberation Serif" fill="#111" stroke="#111" stroke-width="0.12" textLength="5.1" lengthAdjust="spacingAndGlyphs">p</text>
<text x="279.4" y="642" font-size="12" font-family="Liberation Serif" fill="#111" stroke="#111" stroke-width="0.12" textLength="5.1" lengthAdjust="spacingAndGlyphs">e</text>
<text x="285.4" y="642" font-size="12" font-family="Liberation Serif" fill="#111" stroke="#111" stroke-width="0.12" textLength="5.1" lengthAdjust="spacingAndGlyphs">n</text>
<text x="303.4" y="642" font-size="12" font-family="Liberation Serif" fill="#111" stroke="#111" stroke-width="0.12" textLength="5.1" lengthAdjust="spacingAndGlyphs">h</text>
<text x="309.4" y="642" font-size="12" font-family="Liberation Serif" fill="#111" stroke="#111" stroke-width="0.12" textLength="5.1" lengthAdjust="spacingAndGlyphs">e</text>
<text x="321.4" y="642" font-size="12" font-family="Liberation Serif" fill="#111" stroke="#111" stroke-width="0.12" textLength="5.1" lengthAdjust="spacingAndGlyphs">E</text>
<text x="327.4" y="642" font-size="12" font-family="Liberation Serif" fill="#111" stroke="#111" stroke-width="0.12" textLength="5.1" lengthAdjust="spacingAndGlyphs">R</text>
<text x="333.4" y="642" font-size="12" font-family="Liberation Serif" fill="#111" stroke="#111" stroke-width="0.12" textLength="5.1" lengthAdjust="spacingAndGlyphs">R</text>
<text x="339.4" y="642" font-size="12" font-family="Liberation Serif" fill="#111" stroke="#111" stroke-width="0.12" textLength="5.1" lengthAdjust="spacingAndGlyphs">O</text>
<text x="345.4" y="642" font-size="12" font-family="Liberation Serif" fill="#111" stroke="#111" stroke-width="0.12" textLength="5.1" lengthAdjust="spacingAndGlyphs">R</text>
<text x="351.4" y="642" font-size="12" font-family="Liberation Serif" fill="#111" stroke="#111" stroke-width="0.12" textLength="5.1" lengthAdjust="spacingAndGlyphs">S</text>
<text x="363.4" y="642" font-size="12" font-family="Liberation Serif" fill="#111" stroke="#111" stroke-width="0.12" textLength="5.1" lengthAdjust="spacingAndGlyphs">v</text>
<text x="375.4" y="642" font-size="12" font-family="Liberation Serif" fill="#111" stroke="#111" stroke-width="0.12" textLength="5.1" lengthAdjust="spacingAndGlyphs">e</text>
<text x="381.4" y="642" font-size="12" font-family="Liberation Serif" fill="#111" stroke="#111" stroke-width="0.12" textLength="5.1" lengthAdjust="spacingAndGlyphs">w</text>
<text x="399.4" y="642" font-size="12" font-family="Liberation Serif" fill="#111" stroke="#111" stroke-width="0.12" textLength="5.1" lengthAdjust="spacingAndGlyphs">n</text>
<text x="417.4" y="642" font-size="12" font-family="Liberation Serif" fill="#111" stroke="#111" stroke-width="0.12" textLength="5.1" lengthAdjust="spacingAndGlyphs">h</text>
<text x="423.4" y="642" font-size="12" font-family="Liberation Serif" fill="#111" stroke="#111" stroke-width="0.12" textLength="5.1" lengthAdjust="spacingAndGlyphs">e</text>
<text x="435.4" y="642" font-size="12" font-family="Liberation Serif" fill="#111" stroke="#111" stroke-width="0.12" textLength="5.1" lengthAdjust="spacingAndGlyphs">e</text>
<text x="441.4" y="642" font-size="12" font-family="Liberation Serif" fill="#111" stroke="#111" stroke-width="0.12" textLength="5.1" lengthAdjust="spacingAndGlyphs">x</text>
<text x="447.4" y="642" font-size="12" font-family="Liberation Serif" fill="#111" stroke="#111" stroke-width="0.12" textLength="5.1" lengthAdjust="spacingAndGlyphs">p</text>
<text x="459.4" y="642" font-size="12" font-family="Liberation Serif" fill="#111" stroke="#111" stroke-width="0.12" textLength="5.1" lengthAdjust="spacingAndGlyphs">o</text>
<text x="471.4" y="642" font-size="12" font-family="Liberation Serif" fill="#111" stroke="#111" stroke-width="0.12" textLength="5.1" lengthAdjust="spacingAndGlyphs">e</text>
<text x="94.3 111.7 118.3 142.3 154.0 202.0 214.3 231.7 238.5 256.0 298.3 370.3 394.3 412.3 454.3 466.0 478.0" y="642" font-size="12" font-family="Liberation Serif" fill="#111" stroke="#111" stroke-width="0.12">tsttrris,rtiitlrr</text>
<rect x="893" y="575" width="16" height="92" fill="url(#gTrackV)"/>
<path d="M897,586 L901,582 L905,586 Z" fill="#3a3a3a"/>
<rect x="893.5" y="643.5" width="14" height="5" rx="2" fill="url(#gThumbV)" stroke="#979797"/>
<path d="M897,656 L901,660 L905,656 Z" fill="#3a3a3a"/>
<rect x="5" y="668" width="908" height="3" fill="#e9eef4"/>
<rect x="5" y="671" width="911" height="5" fill="#f0f0f0"/>
<rect x="5" y="671" width="911" height="1" fill="#8e8e8e"/>
<rect x="5" y="671" width="1" height="5" fill="#8e8e8e"/>
<rect x="6" y="672" width="1" height="4" fill="#ffffff"/>
<rect x="135" y="672" width="1" height="4" fill="#8e8e8e"/>
<rect x="277" y="672" width="1" height="4" fill="#8e8e8e"/>
<rect x="401" y="672" width="1" height="4" fill="#8e8e8e"/>
<rect x="830" y="672" width="1" height="4" fill="#8e8e8e"/>
<rect x="903" y="672" width="1" height="4" fill="#8e8e8e"/>
</svg></body></html>
